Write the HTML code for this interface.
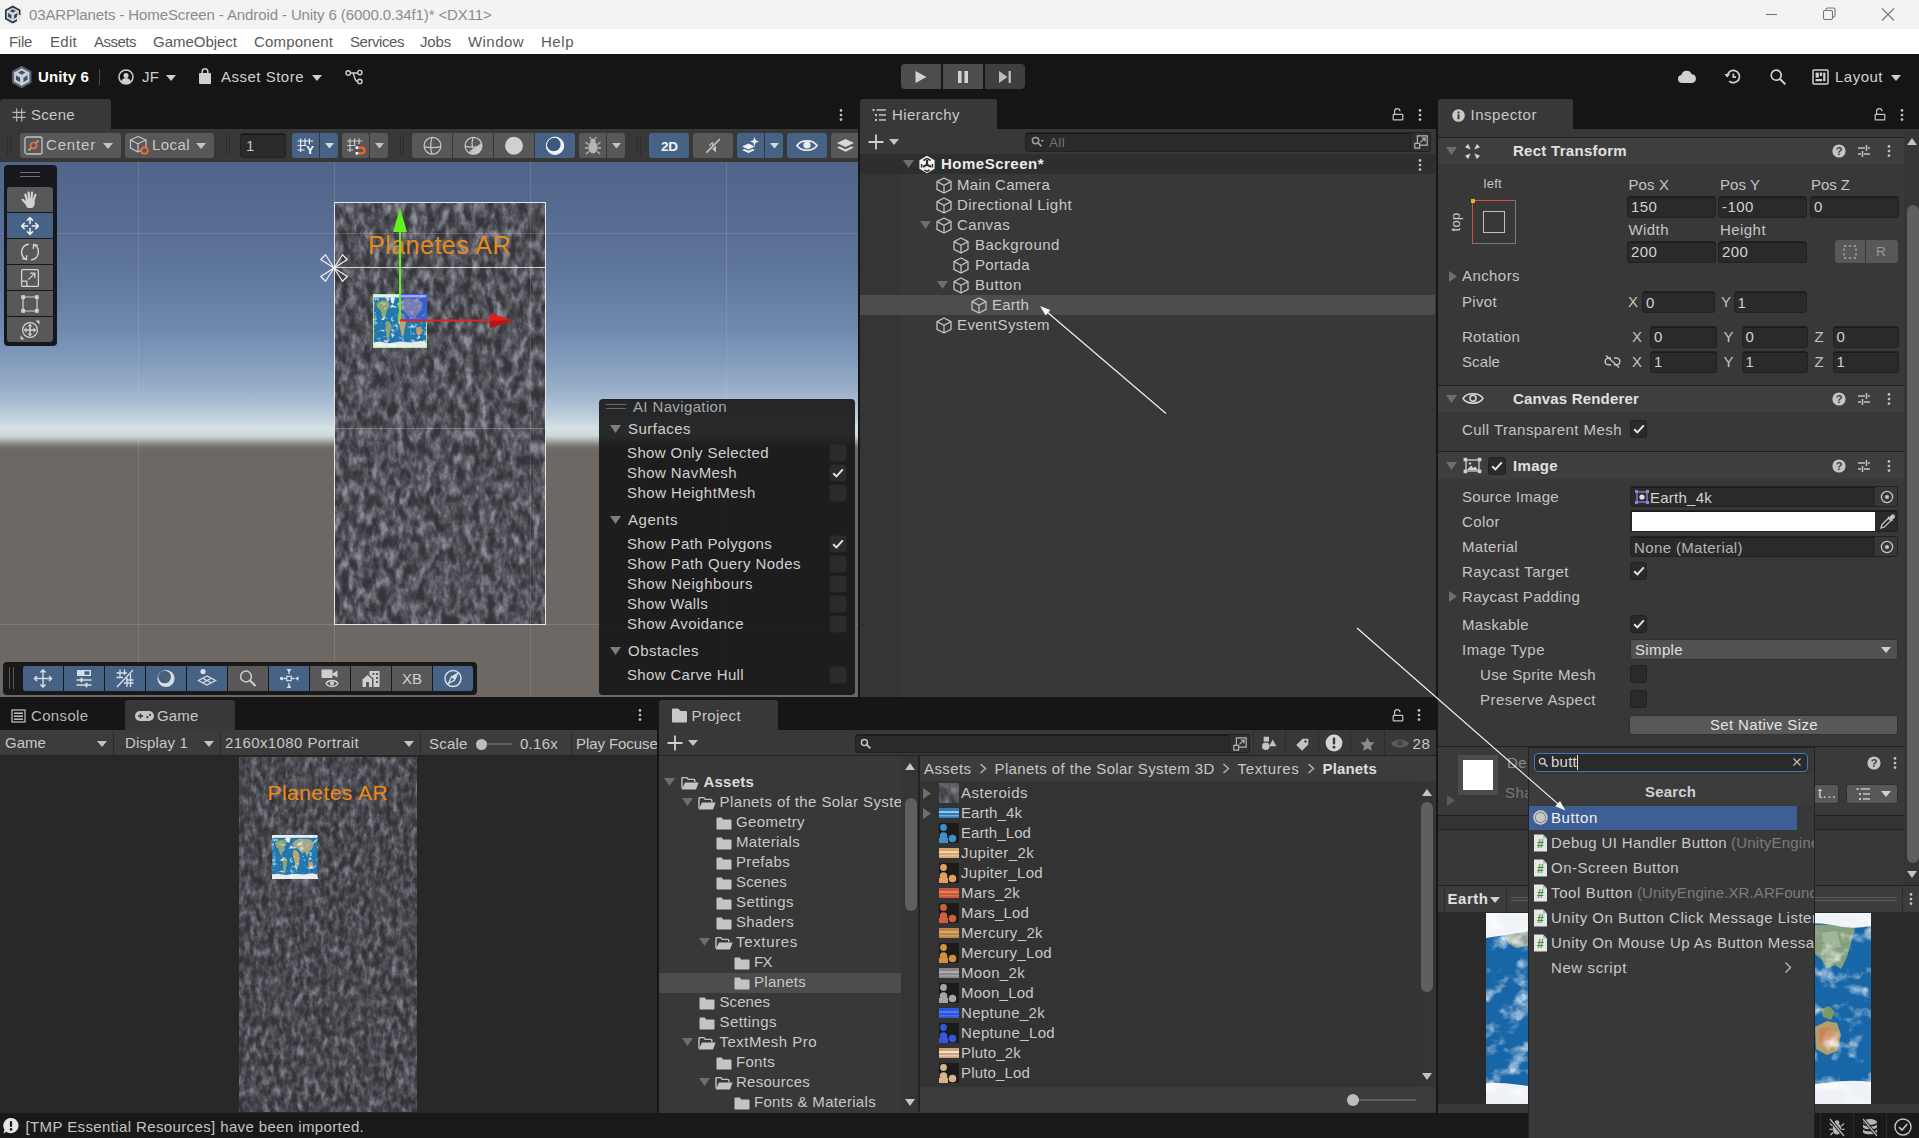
<!DOCTYPE html><html><head><meta charset="utf-8"><title>03ARPlanets - HomeScreen - Android - Unity 6</title><style>
*{box-sizing:border-box;margin:0;padding:0}
html,body{width:1919px;height:1138px;overflow:hidden;background:#191919}
body{font-family:"Liberation Sans",sans-serif;font-size:16px;color:#c8c8c8;position:relative}
div,svg,span.a{position:absolute}
.t{white-space:nowrap;height:20px;line-height:20px;font-size:15px;letter-spacing:0.45px;color:#c8c8c8}
.b{font-weight:bold;color:#dcdcdc}
.dim{color:#8a8a8a}
.btn{background:#585858;border-radius:3px}
.sel{background:#466386}
.fld{background:#2a2a2a;border:1px solid #212121;border-radius:3px;box-shadow:inset 0 1px 0 #1a1a1a}
.chk{background:#2a2a2a;border:1px solid #212121;border-radius:3px;width:18px;height:18px}
.pnl{background:#383838}
.tab{background:#383838;border-radius:3px 3px 0 0}
.clip{overflow:hidden}
</style></head><body>
<div style="left:0px;top:0px;width:1919px;height:29px;background:#f3f3f3"></div>
<svg style="left:3.5px;top:4.5px;" width="17.5" height="19" viewBox="0 0 20 22"><path d="M10 0.6L19 5.6V16.4L10 21.4L1 16.4V5.6Z" fill="#2b313a"/><path d="M10 2.8L17.1 6.7V15.3L10 19.2L2.9 15.3V6.7Z" fill="#ccd5e1"/><path d="M10 5L13.4 6.9L10 8.8L6.6 6.9Z" fill="#39414d"/><path d="M4.6 9.4L8.4 11.6V15.8L4.6 13.6Z" fill="#39414d"/><path d="M15.4 9.4L11.6 11.6V15.8L15.4 13.6Z" fill="#39414d"/></svg>
<div style="left:16.5px;top:15px;width:4.5px;height:7px;background:#dfe2e7;border:1px solid #f3f3f3;border-radius:1px"></div>
<div class="t" style="left:29px;top:5.0px;font-size:15px;letter-spacing:-0.11px;color:#8b8b8b">03ARPlanets - HomeScreen - Android - Unity 6 (6000.0.34f1)* &lt;DX11&gt;</div>
<svg style="left:1760px;top:4px;" width="150" height="20" viewBox="0 0 150 20"><g stroke="#777" stroke-width="1.1" fill="none"><path d="M6 10.5H17"/><rect x="63.5" y="6.5" width="9" height="9" rx="1.5"/><path d="M66 6.3V5.5a1.5 1.5 0 0 1 1.5-1.5h6a1.5 1.5 0 0 1 1.5 1.5v6a1.5 1.5 0 0 1-1.5 1.5H72.8"/><path d="M122 4.5L134 16.5M134 4.5L122 16.5"/></g></svg>
<div style="left:0px;top:29px;width:1919px;height:25px;background:#ffffff"></div>
<div class="t" style="left:9px;top:32.0px;font-size:15px;letter-spacing:-0.29px;color:#5a5a5a">File</div>
<div class="t" style="left:50px;top:32.0px;font-size:15px;letter-spacing:0.29px;color:#5a5a5a">Edit</div>
<div class="t" style="left:94px;top:32.0px;font-size:15px;letter-spacing:-0.50px;color:#5a5a5a">Assets</div>
<div class="t" style="left:153px;top:32.0px;font-size:15px;letter-spacing:-0.02px;color:#5a5a5a">GameObject</div>
<div class="t" style="left:254px;top:32.0px;font-size:15px;letter-spacing:0.16px;color:#5a5a5a">Component</div>
<div class="t" style="left:350px;top:32.0px;font-size:15px;letter-spacing:-0.44px;color:#5a5a5a">Services</div>
<div class="t" style="left:420px;top:32.0px;font-size:15px;letter-spacing:-0.17px;color:#5a5a5a">Jobs</div>
<div class="t" style="left:468px;top:32.0px;font-size:15px;letter-spacing:0.44px;color:#5a5a5a">Window</div>
<div class="t" style="left:541px;top:32.0px;font-size:15px;letter-spacing:0.54px;color:#5a5a5a">Help</div>
<div style="left:0px;top:54px;width:1919px;height:46px;background:#151515"></div>
<svg style="left:11px;top:65px;" width="21.5" height="24" viewBox="0 0 20 22"><path d="M10 0.6L19 5.6V16.4L10 21.4L1 16.4V5.6Z" fill="#5a6472"/><path d="M10 2.8L17.1 6.7V15.3L10 19.2L2.9 15.3V6.7Z" fill="#c6ced9"/><path d="M10 5L13.4 6.9L10 8.8L6.6 6.9Z" fill="#465060"/><path d="M4.6 9.4L8.4 11.6V15.8L4.6 13.6Z" fill="#465060"/><path d="M15.4 9.4L11.6 11.6V15.8L15.4 13.6Z" fill="#465060"/></svg>
<div class="t" style="left:38px;top:67.1px;font-size:15px;letter-spacing:0.14px;font-weight:bold;color:#ffffff">Unity 6</div>
<div style="left:99px;top:69px;width:1px;height:16px;background:#4a4a4a"></div>
<svg style="left:118px;top:69px;" width="16" height="16" viewBox="0 0 16 16"><circle cx="8" cy="8" r="7" fill="none" stroke="#d0d0d0" stroke-width="1.5"/><circle cx="8" cy="6.4" r="2.5" fill="#d0d0d0"/><path d="M3.2 12.6a5 5 0 0 1 9.6 0A6.6 6.6 0 0 1 3.2 12.6Z" fill="#d0d0d0"/></svg>
<div class="t" style="left:142px;top:67.1px;font-size:15px;letter-spacing:0.17px;color:#d0d0d0">JF</div>
<svg style="left:165.5px;top:74.5px;" width="10" height="6" viewBox="0 0 10 6"><path d="M0 0H10L5.0 6Z" fill="#d0d0d0"/></svg>
<svg style="left:198px;top:68px;" width="14" height="17" viewBox="0 0 14 17"><path d="M4.2 5V3.6a2.8 2.8 0 0 1 5.6 0V5" fill="none" stroke="#d0d0d0" stroke-width="1.5"/><rect x="1" y="5" width="12" height="11" rx="1" fill="#d0d0d0"/></svg>
<div class="t" style="left:221px;top:67.1px;font-size:15px;letter-spacing:0.50px;color:#d0d0d0">Asset Store</div>
<svg style="left:311.5px;top:74.5px;" width="10" height="6" viewBox="0 0 10 6"><path d="M0 0H10L5.0 6Z" fill="#d0d0d0"/></svg>
<svg style="left:345px;top:69px;" width="19" height="16" viewBox="0 0 19 16"><g fill="none" stroke="#d0d0d0" stroke-width="1.4"><circle cx="3.2" cy="4" r="2.2"/><circle cx="14.8" cy="3.6" r="2.2"/><circle cx="14.8" cy="12.4" r="2.2"/><path d="M5.4 4H12.6M7.5 4C9.5 4 9 12.4 12.6 12.4"/></g></svg>
<div style="left:901px;top:64px;width:40px;height:25px;background:#4d4d4d;border-radius:4px 0 0 4px"></div>
<div style="left:943px;top:64px;width:40px;height:25px;background:#4d4d4d"></div>
<div style="left:985px;top:64px;width:40px;height:25px;background:#3f3f3f;border-radius:0 4px 4px 0"></div>
<svg style="left:914px;top:70px;" width="14" height="14" viewBox="0 0 14 14"><path d="M1.5 1V13L12.5 7Z" fill="#d2d2d2"/></svg>
<svg style="left:957px;top:70px;" width="12" height="14" viewBox="0 0 12 14"><rect x="1" y="1" width="3.6" height="12" fill="#d2d2d2"/><rect x="7.4" y="1" width="3.6" height="12" fill="#d2d2d2"/></svg>
<svg style="left:998px;top:70px;" width="14" height="14" viewBox="0 0 14 14"><path d="M1 1V13L9.5 7Z" fill="#bcbcbc"/><rect x="10.6" y="1" width="2.2" height="12" fill="#c4c4c4"/></svg>
<svg style="left:1677px;top:70px;" width="20" height="14" viewBox="0 0 20 14"><path d="M5 13a4 4 0 0 1-.6-7.95A5.4 5.4 0 0 1 14.7 4.3 4.4 4.4 0 0 1 15.4 13Z" fill="#d0d0d0"/></svg>
<svg style="left:1724px;top:68px;" width="18" height="17.2" viewBox="0 0 20 19"><g fill="none" stroke="#d0d0d0" stroke-width="1.9"><path d="M3.6 9.5a6.8 6.8 0 1 1 2.2 5"/><path d="M10.4 6V10.2H13.4"/></g><path d="M0.4 6.6H6.8L3.6 10.6Z" fill="#d0d0d0"/></svg>
<svg style="left:1769px;top:68px;" width="18" height="18" viewBox="0 0 18 18"><circle cx="7.2" cy="7.2" r="5" fill="none" stroke="#d0d0d0" stroke-width="1.7"/><path d="M11 11L16.4 16.4" stroke="#d0d0d0" stroke-width="2"/></svg>
<svg style="left:1812px;top:69px;" width="17" height="16" viewBox="0 0 17 16"><rect x="1" y="1" width="15" height="14" rx="1" fill="none" stroke="#d0d0d0" stroke-width="1.5"/><g fill="#d0d0d0"><rect x="3.6" y="3.6" width="3.2" height="5"/><rect x="7.8" y="3.6" width="2.4" height="3.4"/><rect x="11.2" y="3.6" width="2.2" height="8.6"/><rect x="3.6" y="10" width="6.6" height="2.2"/></g></svg>
<div class="t" style="left:1835px;top:67.1px;font-size:15px;letter-spacing:0.49px;color:#d0d0d0">Layout</div>
<svg style="left:1890.5px;top:74.5px;" width="10" height="6" viewBox="0 0 10 6"><path d="M0 0H10L5.0 6Z" fill="#d0d0d0"/></svg>
<div style="left:0px;top:100px;width:1919px;height:30px;background:#151515"></div>
<div class="tab" style="left:0px;top:99px;width:111px;height:31px;"></div>
<svg style="left:11.5px;top:107.5px;" width="14" height="14" viewBox="0 0 15 15"><g stroke="#b8b8b8" stroke-width="1.25"><path d="M5 0.5V14.5M10.4 0.5V14.5M0.5 4.6H14.5M0.5 10H14.5"/></g></svg>
<div class="t" style="left:31px;top:105.1px;font-size:15px;letter-spacing:0.29px;">Scene</div>
<svg style="left:839px;top:107.5px;" width="4" height="14" viewBox="0 0 4 14"><g fill="#c4c4c4"><circle cx="2" cy="2.4" r="1.35"/><circle cx="2" cy="7" r="1.35"/><circle cx="2" cy="11.6" r="1.35"/></g></svg>
<div style="left:0px;top:129px;width:858px;height:33px;background:#383838"></div>
<div style="left:7px;top:135px;width:1px;height:20px;background:#2c2c2c"></div>
<div style="left:10px;top:135px;width:1px;height:20px;background:#2c2c2c"></div>
<div class="btn" style="left:20px;top:133px;width:101px;height:25px;border-radius:3px;"></div>
<svg style="left:24px;top:136px;" width="19" height="19" viewBox="0 0 19 19"><rect x="1" y="1" width="17" height="17" rx="2" fill="none" stroke="#c4c4c4" stroke-width="1.3"/><path d="M4.5 14.5L14.5 4.5" stroke="#c4c4c4" stroke-width="1.2"/><circle cx="9.5" cy="9.5" r="3" fill="#585858" stroke="#f26a3c" stroke-width="1.7"/></svg>
<div class="t" style="left:46px;top:135.1px;font-size:15px;letter-spacing:0.83px;">Center</div>
<svg style="left:103.0px;top:142.5px;" width="10" height="6" viewBox="0 0 10 6"><path d="M0 0H10L5.0 6Z" fill="#c4c4c4"/></svg>
<div class="btn" style="left:125px;top:133px;width:89px;height:25px;border-radius:3px;"></div>
<svg style="left:129px;top:135px;" width="22" height="22" viewBox="0 0 22 22"><g fill="none" stroke="#c4c4c4" stroke-width="1.25" stroke-linejoin="round"><path d="M9 1.5L17 5V13L9 17L1.5 13V5Z"/><path d="M1.5 5L9 8.8L17 5M9 8.8V17"/></g><circle cx="15.5" cy="15.5" r="3.2" fill="#585858" stroke="#f26a3c" stroke-width="1.8"/></svg>
<div class="t" style="left:152px;top:135.1px;font-size:15px;letter-spacing:0.43px;">Local</div>
<svg style="left:196.0px;top:142.5px;" width="10" height="6" viewBox="0 0 10 6"><path d="M0 0H10L5.0 6Z" fill="#c4c4c4"/></svg>
<div style="left:226px;top:135px;width:1px;height:20px;background:#2c2c2c"></div>
<div style="left:229px;top:135px;width:1px;height:20px;background:#2c2c2c"></div>
<div class="fld" style="left:240px;top:133px;width:46px;height:25px;"></div>
<div class="t" style="left:246px;top:136.1px;font-size:15px;letter-spacing:-0.80px;">1</div>
<div class="btn sel" style="left:292px;top:133px;width:27px;height:25px;border-radius:3px 0 0 3px;"></div>
<div class="btn sel" style="left:320px;top:133px;width:18px;height:25px;border-radius:0 3px 3px 0;"></div>
<svg style="left:296px;top:136px;" width="20" height="20" viewBox="0 0 20 20"><g stroke="#f0f0f0" stroke-width="1.2" fill="none"><path d="M4.6 2.4V16M9 2.4V10M13.4 2.4V8.6M1.6 5H17M1.6 9.5H10.5M1.6 14H8.4"/></g><text x="14" y="18" font-size="11.5" font-weight="bold" font-family="Liberation Sans,sans-serif" text-anchor="middle" fill="#ffffff" stroke="#46607c" stroke-width="0.6" paint-order="stroke">Y</text></svg>
<svg style="left:324.5px;top:142.75px;" width="9" height="5.5" viewBox="0 0 9 5.5"><path d="M0 0H9L4.5 5.5Z" fill="#d8d8d8"/></svg>
<div class="btn" style="left:342px;top:133px;width:27px;height:25px;border-radius:3px;"></div>
<div class="btn" style="left:370px;top:133px;width:18px;height:25px;border-radius:0 3px 3px 0;"></div>
<svg style="left:346px;top:136px;" width="22" height="20" viewBox="0 0 22 20"><g stroke="#c8c8c8" stroke-width="1.2" fill="none"><path d="M4 2.4V16M8.6 2.4V10M13 2.4V8M1 5H16.4M1 9.5H9.4M1 14H7.4"/></g><path d="M12 11.6H15.6a2.9 2.9 0 0 1 0 5.8H12" fill="none" stroke="#f4602c" stroke-width="2.4"/><rect x="9.6" y="10.4" width="2.6" height="2.5" fill="#fff"/><rect x="9.6" y="16.1" width="2.6" height="2.5" fill="#fff"/></svg>
<svg style="left:374.5px;top:142.75px;" width="9" height="5.5" viewBox="0 0 9 5.5"><path d="M0 0H9L4.5 5.5Z" fill="#c4c4c4"/></svg>
<div style="left:400px;top:135px;width:1px;height:20px;background:#2c2c2c"></div>
<div style="left:403px;top:135px;width:1px;height:20px;background:#2c2c2c"></div>
<div class="btn" style="left:412px;top:133px;width:40px;height:25px;border-radius:3px 0 0 3px;"></div>
<div class="btn" style="left:453px;top:133px;width:40px;height:25px;border-radius:0;"></div>
<div class="btn" style="left:494px;top:133px;width:40px;height:25px;border-radius:0;"></div>
<div class="btn sel" style="left:535px;top:133px;width:40px;height:25px;border-radius:0 3px 3px 0;"></div>
<svg style="left:422.5px;top:136px;" width="19" height="19.5" viewBox="0 0 19 19.5"><g fill="none" stroke="#c8c8c8" stroke-width="1.25"><circle cx="9.5" cy="9.75" r="8.4"/><path d="M9 1.4C7.6 6 7.6 13.5 9 18.1M1.2 10.6C5 12 14 12 17.8 10.6"/></g></svg>
<svg style="left:463.5px;top:136px;" width="19" height="19.5" viewBox="0 0 19 19.5"><path d="M17.9 9.4A8.4 8.4 0 0 1 4 16.2C10 17 15.4 13.6 17.9 9.4Z M17.6 7C17.6 12 12 16 5 15.4" fill="#c8c8c8"/><path d="M16.4 6.5A7 7 0 0 1 5.2 15.4A9.5 9.5 0 0 0 16.4 6.5Z" fill="#c8c8c8"/><g fill="none" stroke="#c8c8c8" stroke-width="1.25"><circle cx="9.5" cy="9.75" r="8.4"/><path d="M9 1.4C7.8 5 7.8 9 8.6 12.4M1.2 10.2C4 11.2 9 11.4 12.4 10.8"/></g></svg>
<svg style="left:504px;top:136px;" width="20" height="20" viewBox="0 0 20 20"><circle cx="10" cy="9.75" r="9" fill="#d0d0d0"/></svg>
<svg style="left:545px;top:136px;" width="20" height="20" viewBox="0 0 20 20"><circle cx="10" cy="9.75" r="9" fill="#f4f4f4"/><circle cx="8.7" cy="8.4" r="6.9" fill="#3a5a80"/><circle cx="10" cy="9.75" r="8.6" fill="none" stroke="#f4f4f4" stroke-width="1"/></svg>
<div class="btn" style="left:579px;top:133px;width:27px;height:25px;border-radius:3px 0 0 3px;"></div>
<div class="btn" style="left:607px;top:133px;width:18px;height:25px;border-radius:0 3px 3px 0;"></div>
<svg style="left:583px;top:136px;" width="20" height="20" viewBox="0 0 20 20"><g fill="#b4b4b4"><ellipse cx="10" cy="11.5" rx="4.6" ry="6"/><circle cx="10" cy="5" r="2.6"/></g><g stroke="#b4b4b4" stroke-width="1.4" fill="none"><path d="M5.5 8.5L2.5 6M14.5 8.5L17.5 6M5.2 12H2M14.8 12H18M5.8 15.5L3 18M14.2 15.5L17 18M8 3L6.8 1M12 3L13.2 1"/></g></svg>
<svg style="left:611.5px;top:142.75px;" width="9" height="5.5" viewBox="0 0 9 5.5"><path d="M0 0H9L4.5 5.5Z" fill="#c4c4c4"/></svg>
<div style="left:637px;top:135px;width:1px;height:20px;background:#2c2c2c"></div>
<div style="left:640px;top:135px;width:1px;height:20px;background:#2c2c2c"></div>
<div class="btn sel" style="left:649px;top:133px;width:40px;height:25px;border-radius:3px;"></div>
<div class="t" style="left:661px;top:136.7px;font-size:13.5px;letter-spacing:-0.38px;font-weight:bold;color:#f4f4f4">2D</div>
<div class="btn" style="left:693px;top:133px;width:40px;height:25px;border-radius:3px;"></div>
<svg style="left:703px;top:136px;" width="20" height="20" viewBox="0 0 20 20"><path d="M3.4 16.6L17 3" stroke="#c8c8c8" stroke-width="1.5"/><path d="M6.4 9.6L9.6 6.4M9.6 6.4V9.6" stroke="#c8c8c8" stroke-width="1.3" fill="none"/><path d="M13 9.6V16.4L9.2 13Z" fill="#c8c8c8"/></svg>
<div class="btn sel" style="left:737px;top:133px;width:27px;height:25px;border-radius:3px 0 0 3px;"></div>
<div class="btn sel" style="left:765px;top:133px;width:18px;height:25px;border-radius:0 3px 3px 0;"></div>
<svg style="left:740px;top:136px;" width="21" height="20" viewBox="0 0 21 20"><path d="M2 10.5L8.5 7.5L15 10.5L8.5 13.5Z M2 14L4.5 12.9L8.5 14.8L12.5 12.9L15 14L8.5 17Z" fill="#f0f0f0"/><path d="M14.5 1L15.7 4.3L19 5.5L15.7 6.7L14.5 10L13.3 6.7L10 5.5L13.3 4.3Z" fill="#f0f0f0"/></svg>
<svg style="left:769.5px;top:142.75px;" width="9" height="5.5" viewBox="0 0 9 5.5"><path d="M0 0H9L4.5 5.5Z" fill="#d8d8d8"/></svg>
<div class="btn sel" style="left:787px;top:133px;width:40px;height:25px;border-radius:3px;"></div>
<svg style="left:796px;top:138px;" width="22" height="15" viewBox="0 0 22 15"><path d="M1 7.5C5 1.2 17 1.2 21 7.5C17 13.8 5 13.8 1 7.5Z" fill="none" stroke="#ececec" stroke-width="1.7"/><circle cx="11" cy="7" r="3.6" fill="#ececec"/></svg>
<div class="btn" style="left:831px;top:133px;width:27px;height:25px;border-radius:3px 0 0 3px"></div>
<svg style="left:836px;top:137px;" width="20" height="18" viewBox="0 0 20 18"><path d="M1 6L9.5 2L18 6L9.5 10Z M1 10.6L3.6 9.4L9.5 12.2L15.4 9.4L18 10.6L9.5 14.8Z" fill="#d8d8d8"/></svg>
<div class="clip" style="left:0;top:162px;width:858px;height:536px;background:linear-gradient(180deg,#4f6589 0%,#52678b 3.4%,#586e93 13.2%,#647ba0 23.1%,#7089af 31.3%,#859dbe 37.9%,#9bb1ca 42.7%,#abbfd2 45.1%,#bfcfdb 47.6%,#d5e1e5 49.6%,#ccd8da 51.1%,#a5abab 52%,#77746f 53%,#6d6863 53.7%,#6d6863 100%)">
<div style="left:138px;top:0px;width:1px;height:535px;background:rgba(215,215,215,0.17)"></div>
<div style="left:334px;top:0px;width:1px;height:535px;background:rgba(215,215,215,0.17)"></div>
<div style="left:530px;top:0px;width:1px;height:535px;background:rgba(215,215,215,0.17)"></div>
<div style="left:726px;top:0px;width:1px;height:535px;background:rgba(215,215,215,0.17)"></div>
<div style="left:0px;top:71px;width:858px;height:1px;background:rgba(215,215,215,0.17)"></div>
<div style="left:0px;top:266px;width:858px;height:1px;background:rgba(215,215,215,0.17)"></div>
<div style="left:0px;top:462px;width:858px;height:1px;background:rgba(215,215,215,0.17)"></div>
</div>
<svg width="0" height="0" style="left:0;top:0"><defs>
<filter id="granite" x="0" y="0" width="100%" height="100%" color-interpolation-filters="sRGB">
 <feTurbulence type="fractalNoise" baseFrequency="0.13 0.075" numOctaves="4" seed="7" result="n"/>
 <feColorMatrix in="n" type="matrix" values="1.7 0.8 0 0 -0.86  1.7 0.8 0 0 -0.86  1.7 0.8 0 0 -0.86  0 0 0 0 1" result="g"/>
 <feComponentTransfer in="g"><feFuncR type="table" tableValues="0.21 0.27 0.36 0.47 0.56"/><feFuncG type="table" tableValues="0.213 0.273 0.363 0.473 0.563"/><feFuncB type="table" tableValues="0.235 0.298 0.39 0.505 0.60"/></feComponentTransfer>
</filter>
<filter id="granite2" x="0" y="0" width="100%" height="100%" color-interpolation-filters="sRGB">
 <feTurbulence type="fractalNoise" baseFrequency="0.17 0.10" numOctaves="4" seed="19" result="n"/>
 <feColorMatrix in="n" type="matrix" values="1.5 0.7 0 0 -0.74  1.5 0.7 0 0 -0.74  1.5 0.7 0 0 -0.74  0 0 0 0 1" result="g"/>
 <feComponentTransfer in="g"><feFuncR type="table" tableValues="0.20 0.255 0.335 0.435 0.52"/><feFuncG type="table" tableValues="0.202 0.257 0.337 0.437 0.522"/><feFuncB type="table" tableValues="0.222 0.28 0.365 0.47 0.56"/></feComponentTransfer>
</filter>
<filter id="clouds" x="0" y="0" width="100%" height="100%" color-interpolation-filters="sRGB">
 <feTurbulence type="fractalNoise" baseFrequency="0.22 0.26" numOctaves="3" seed="3" result="n"/>
 <feColorMatrix in="n" type="matrix" values="0 0 0 0 1  0 0 0 0 1  0 0 0 0 1  3.4 2.2 0 0 -3.05"/>
</filter>
<filter id="clouds2" x="0" y="0" width="100%" height="100%" color-interpolation-filters="sRGB">
 <feTurbulence type="fractalNoise" baseFrequency="0.045 0.055" numOctaves="4" seed="11" result="n"/>
 <feColorMatrix in="n" type="matrix" values="0 0 0 0 1  0 0 0 0 1  0 0 0 0 1  2.6 1.6 0 0 -2.2"/>
</filter>
</defs></svg>
<div class="clip" style="left:0;top:162px;width:858px;height:535px">
<svg style="left:334px;top:40px;" width="212" height="423" viewBox="0 0 212 423"><rect width="212" height="423" filter="url(#granite)"/></svg>
<div style="left:334px;top:40px;width:212px;height:423px;border:1px solid #e6e6e6"></div>
<div style="left:334px;top:71px;width:212px;height:1px;background:rgba(225,225,225,0.22)"></div>
<div style="left:334px;top:105px;width:212px;height:1px;background:rgba(235,235,235,0.85)"></div>
<div style="left:334px;top:266px;width:212px;height:1px;background:rgba(225,225,225,0.3)"></div>
<div style="left:530px;top:40px;width:1px;height:423px;background:rgba(225,225,225,0.16)"></div>
<div class="t" style="left:368px;top:68px;height:30px;line-height:30px;font-size:25px;color:#e58a1c;letter-spacing:0.49px">Planetes AR</div>
<svg style="left:373px;top:132px;" width="54" height="54" viewBox="0 0 54 54"><rect width="54" height="54" fill="#2277ad"/><g transform="scale(0.5400,1.0800)"><g fill="#8fa672"><path d="M6 9L16 6L28 6L31 11L26 15L24 19L21 23L17 21L14 15L9 13Z"/><path d="M23 26L29 25L34 29L31 37L27 46L25 40L24 33Z"/><path d="M46 18L52 17L57 19L61 26L57 37L53 39L50 31L46 24Z" fill="#b6a871"/><path d="M45 9L52 6L62 4L84 5L93 9L88 16L81 19L77 25L72 19L66 21L60 17L55 15L48 14Z" fill="#a3a88a"/><path d="M80 31L89 30L91 36L84 39L80 36Z" fill="#c19a68"/></g><path d="M32 3L41 3L38 9L34 8Z" fill="#eef1f4"/><rect width="100" height="3.2" fill="#e9eef3"/><path d="M0 50V45L12 44L30 45.5L50 44L70 45L88 43.5L100 45V50Z" fill="#e8ecf1"/></g><rect width="54" height="54" filter="url(#clouds)" opacity="0.8"/></svg>
<div style="left:373px;top:132px;width:54px;height:54px;border:1px solid rgba(170,240,150,0.9)"></div>
<div style="left:400px;top:132px;width:27px;height:26px;background:rgba(70,70,235,0.42);border:1px solid rgba(60,80,255,0.9)"></div>
<svg style="left:380px;top:38px;" width="140" height="135" viewBox="0 0 140 135"><path d="M20 120V30" stroke="#63f01e" stroke-width="2"/><path d="M20 8L27 32H13Z" fill="#63f01e"/><path d="M20 120.5H112" stroke="#e02424" stroke-width="2"/><path d="M132 120.5L110 113V128Z" fill="#e31d1d"/><path d="M132 120.5L110 120.5V128Z" fill="#b81414"/></svg>
<svg style="left:317px;top:89px;" width="34" height="34" viewBox="0 0 32 32"><g fill="none" stroke="#f2f2f2" stroke-width="1.1" stroke-linejoin="round"><path d="M16 16L3.5 8L8 3.5Z"/><path d="M16 16L28.5 8L24 3.5Z"/><path d="M16 16L3.5 24L8 28.5Z"/><path d="M16 16L28.5 24L24 28.5Z"/></g></svg>
</div>
<div style="left:3.5px;top:165px;width:53.5px;height:181px;background:#16181d;border-radius:4px"></div>
<div style="left:20px;top:172px;width:20px;height:1px;background:#707070"></div>
<div style="left:20px;top:176px;width:20px;height:1px;background:#707070"></div>
<div class="btn" style="left:7px;top:187px;width:46px;height:25px;border-radius:3px 3px 0 0"></div>
<div class="btn sel" style="left:7px;top:213px;width:46px;height:25px;border-radius:0"></div>
<div class="btn" style="left:7px;top:239px;width:46px;height:25px;border-radius:0"></div>
<div class="btn" style="left:7px;top:265px;width:46px;height:25px;border-radius:0"></div>
<div class="btn" style="left:7px;top:291px;width:46px;height:25px;border-radius:0"></div>
<div class="btn" style="left:7px;top:317px;width:46px;height:25px;border-radius:0 0 3px 3px"></div>
<svg style="left:20px;top:189.5px;" width="20" height="20" viewBox="0 0 20 20"><g stroke="#d2d2d2" stroke-width="2.2" stroke-linecap="round" fill="none"><path d="M7 10.4L5.4 4.6M9.2 9.6L8.6 2.6M11.4 9.6L12 2.6M13.4 10.6L15.4 4.8M6.4 13.6L2.6 9.8"/></g><path d="M5.4 10.5Q10 7.8 14.6 10.5Q15.4 15 13 17.4Q10 18.8 7.2 17.4Q5.2 15.4 5.4 10.5Z" fill="#d2d2d2"/></svg>
<svg style="left:20px;top:215.5px;" width="20" height="20" viewBox="0 0 20 20"><g stroke="#f0f0f0" stroke-width="1.5" fill="none" stroke-linecap="round" stroke-linejoin="round"><path d="M10 1.6V7.6M10 12.4V18.4M1.6 10H7.6M12.4 10H18.4M7.4 4.2L10 1.6L12.6 4.2M7.4 15.8L10 18.4L12.6 15.8M4.2 7.4L1.6 10L4.2 12.6M15.8 7.4L18.4 10L15.8 12.6"/></g></svg>
<svg style="left:20px;top:241.5px;" width="20" height="20" viewBox="0 0 20 20"><g stroke="#d2d2d2" stroke-width="1.4" fill="none" stroke-linecap="round" stroke-linejoin="round"><path d="M13.6 2.6A8 8 0 0 1 11.6 17.8M6.4 17.4A8 8 0 0 1 8.4 2.2"/><path d="M13.4 6.4L13.6 2.4L17.4 3.4M6.6 13.6L6.4 17.6L2.6 16.6"/></g></svg>
<svg style="left:20px;top:267.5px;" width="20" height="20" viewBox="0 0 20 20"><g stroke="#d2d2d2" stroke-width="1.3" fill="none"><rect x="1.6" y="1.6" width="16.8" height="16.8" rx="1.2"/><path d="M1.6 13.2H6.8V18.4"/><path d="M8.4 11.6L14.6 5.4M10 5.2H14.8V10"/></g></svg>
<svg style="left:20px;top:293.5px;" width="20" height="20" viewBox="0 0 20 20"><g stroke="#d2d2d2" stroke-width="1.2"><path d="M5 3H15M5 17H15M3 5V15M17 5V15"/></g><g fill="#d2d2d2"><rect x="1.2" y="1.2" width="3.8" height="3.8"/><rect x="15" y="1.2" width="3.8" height="3.8"/><rect x="1.2" y="15" width="3.8" height="3.8"/><rect x="15" y="15" width="3.8" height="3.8"/></g></svg>
<svg style="left:20px;top:319.5px;" width="20" height="20" viewBox="0 0 20 20"><g stroke="#d2d2d2" stroke-width="1.2" fill="none"><circle cx="10" cy="10" r="7.4"/></g><g fill="#d2d2d2"><path d="M9.2 6.4H10.8V13.6H9.2ZM6.4 9.2H13.6V10.8H6.4Z"/><path d="M10 3.6L12.4 6.6H7.6ZM10 16.4L12.4 13.4H7.6ZM3.6 10L6.6 7.6V12.4ZM16.4 10L13.4 7.6V12.4Z"/><path d="M15.6 0.6H19.4V4.4ZM4.4 19.4H0.6V15.6Z"/></g></svg>
<div style="left:3px;top:662px;width:474px;height:33px;background:#191919;border-radius:4px"></div>
<div style="left:9px;top:667px;width:1px;height:22px;background:#5a5a5a"></div>
<div style="left:13px;top:667px;width:1px;height:22px;background:#5a5a5a"></div>
<div class="btn sel" style="left:23px;top:666px;width:40px;height:25px;border-radius:3px 0 0 3px"></div>
<div class="btn sel" style="left:64px;top:666px;width:40px;height:25px;border-radius:0"></div>
<div class="btn sel" style="left:105px;top:666px;width:40px;height:25px;border-radius:0"></div>
<div class="btn sel" style="left:146px;top:666px;width:40px;height:25px;border-radius:0"></div>
<div class="btn sel" style="left:187px;top:666px;width:40px;height:25px;border-radius:0"></div>
<div class="btn" style="left:228px;top:666px;width:40px;height:25px;border-radius:0"></div>
<div class="btn sel" style="left:269px;top:666px;width:40px;height:25px;border-radius:0"></div>
<div class="btn" style="left:310px;top:666px;width:40px;height:25px;border-radius:0"></div>
<div class="btn" style="left:351px;top:666px;width:40px;height:25px;border-radius:0"></div>
<div class="btn" style="left:392px;top:666px;width:40px;height:25px;border-radius:0"></div>
<div class="btn sel" style="left:433px;top:666px;width:40px;height:25px;border-radius:0 3px 3px 0"></div>
<svg style="left:33px;top:668px;" width="20" height="21" viewBox="0 0 20 21"><g stroke="#d8dde4" stroke-width="1.4" fill="none"><path d="M10 2V19M1.5 10.5H18.5M7.4 4.6L10 2L12.6 4.6M7.4 16.4L10 19L12.6 16.4M4 7.9L1.4 10.5L4 13.1M16 7.9L18.6 10.5L16 13.1"/></g></svg>
<svg style="left:74px;top:668px;" width="20" height="21" viewBox="0 0 20 21"><rect x="3" y="2" width="14" height="6" fill="#d8dde4"/><rect x="10.5" y="3.3" width="5" height="3.4" fill="#46607c"/><g stroke="#d8dde4" stroke-width="1.5"><path d="M2.5 12H17.5M2.5 17H17.5"/><path d="M7.5 9.8V14.2M12.5 14.8V19.2" stroke-width="2"/></g></svg>
<svg style="left:115px;top:668px;" width="20" height="21" viewBox="0 0 20 21"><g stroke="#d8dde4" stroke-width="1.3" fill="none"><path d="M5 1.5V10M9.5 1.5V7M1.5 5H12M1.5 9.5H8M18 2L2 19M11 12H18.5M9 15H18.5M12 9.5V19M15.5 6V19"/></g></svg>
<svg style="left:156px;top:668px;" width="20" height="21" viewBox="0 0 20 21"><circle cx="10" cy="10.5" r="8.6" fill="#d8dde4"/><circle cx="8.6" cy="9" r="6.3" fill="#46607c"/></svg>
<svg style="left:197px;top:668px;" width="20" height="21" viewBox="0 0 20 21"><circle cx="6" cy="3.6" r="2.6" fill="#d8dde4"/><g stroke="#d8dde4" stroke-width="1.3" fill="none"><path d="M10 8L18.5 12.5L10 17L1.5 12.5Z"/><path d="M5.7 10.2L14.3 14.8M14.3 10.2L5.7 14.8"/></g></svg>
<svg style="left:238px;top:668px;" width="20" height="21" viewBox="0 0 20 21"><circle cx="8" cy="8.5" r="5.4" fill="none" stroke="#d0d0d0" stroke-width="1.5"/><path d="M12 12.5L17.5 18" stroke="#d0d0d0" stroke-width="2"/></svg>
<svg style="left:279px;top:668px;" width="20" height="21" viewBox="0 0 20 21"><g fill="#d8dde4"><rect x="7.8" y="8.3" width="4.4" height="4.4" fill="none" stroke="#d8dde4" stroke-width="1.2"/><path d="M10 6V3M10 15V18M7.5 10.5H4.5M12.5 10.5H15.5" stroke="#d8dde4" stroke-width="1.3"/><path d="M7.6 1H12.4L10 4.4ZM7.6 20H12.4L10 16.6Z"/><circle cx="2.6" cy="10.5" r="1.8"/><path d="M19.5 8.2V12.8L16 10.5Z"/></g></svg>
<svg style="left:320px;top:668px;" width="20" height="21" viewBox="0 0 20 21"><rect x="1.5" y="1.5" width="11" height="8.5" rx="1" fill="#d0d0d0"/><path d="M12.5 5.5L17.5 2.5V9.5L12.5 7Z" fill="#d0d0d0"/><path d="M6 15.5C8.5 11.5 15.5 11.5 18 15.5C15.5 19.5 8.5 19.5 6 15.5Z" fill="none" stroke="#d0d0d0" stroke-width="1.4"/><circle cx="12" cy="15.3" r="2" fill="#d0d0d0"/></svg>
<svg style="left:361px;top:668px;" width="20" height="21" viewBox="0 0 20 21"><path d="M1.5 19V11.5L6.5 7L11 11V19H8V14H5V19Z" fill="#d0d0d0"/><path d="M8.5 3H18.5V19H12.5V10.5L8.5 7Z" fill="#d0d0d0"/><g fill="#585858"><rect x="11.5" y="5" width="2" height="2"/><rect x="15" y="5" width="2" height="2"/><rect x="15" y="9" width="2" height="2"/><rect x="15" y="13" width="2" height="2"/></g></svg>
<div class="t" style="left:402px;top:668.6px;font-size:15px;letter-spacing:-0.00px;color:#d0d0d0">XB</div>
<svg style="left:443px;top:668px;" width="20" height="21" viewBox="0 0 20 21"><circle cx="10" cy="10.5" r="8" fill="none" stroke="#d8dde4" stroke-width="1.5"/><path d="M14.5 5.5L11.6 12L5.5 15.5L8.4 9Z" fill="none" stroke="#d8dde4" stroke-width="1.3"/><path d="M14.5 5.5L11.6 12L8.4 9Z" fill="#d8dde4"/></svg>
<div style="left:599px;top:398.5px;width:256px;height:296px;background:rgba(21,21,21,0.9);border-radius:4px"></div>
<div style="left:606px;top:404px;width:20px;height:1px;background:#6a6a6a"></div>
<div style="left:606px;top:408px;width:20px;height:1px;background:#6a6a6a"></div>
<div class="t" style="left:633px;top:397.1px;font-size:15px;letter-spacing:0.37px;color:#a8a8a8">AI Navigation</div>
<svg style="left:610.0px;top:425px;" width="11" height="8" viewBox="0 0 11 8"><path d="M0 0H11L5.5 8Z" fill="#7e7e7e"/></svg>
<div class="t" style="left:628px;top:419.1px;font-size:15px;letter-spacing:0.48px;color:#d0d0d0">Surfaces</div>
<div class="t" style="left:627px;top:443.1px;font-size:15px;letter-spacing:0.38px;color:#d0d0d0">Show Only Selected</div>
<div style="left:829px;top:444px;width:18px;height:18px;background:#2b2b2b;border-radius:3px;border:1px solid #232323"></div>
<div class="t" style="left:627px;top:463.1px;font-size:15px;letter-spacing:0.41px;color:#d0d0d0">Show NavMesh</div>
<div style="left:829px;top:464px;width:18px;height:18px;background:#2b2b2b;border-radius:3px;border:1px solid #232323"></div>
<svg style="left:832px;top:468px;" width="12" height="10" viewBox="0 0 12 10"><path d="M1.2 5.2L4.4 8.4L10.8 1.4" fill="none" stroke="#e4e4e4" stroke-width="2"/></svg>
<div class="t" style="left:627px;top:483.1px;font-size:15px;letter-spacing:0.48px;color:#d0d0d0">Show HeightMesh</div>
<div style="left:829px;top:484px;width:18px;height:18px;background:#2b2b2b;border-radius:3px;border:1px solid #232323"></div>
<svg style="left:610.0px;top:516px;" width="11" height="8" viewBox="0 0 11 8"><path d="M0 0H11L5.5 8Z" fill="#7e7e7e"/></svg>
<div class="t" style="left:628px;top:510.1px;font-size:15px;letter-spacing:0.55px;color:#d0d0d0">Agents</div>
<div class="t" style="left:627px;top:534.1px;font-size:15px;letter-spacing:0.37px;color:#d0d0d0">Show Path Polygons</div>
<div style="left:829px;top:535px;width:18px;height:18px;background:#2b2b2b;border-radius:3px;border:1px solid #232323"></div>
<svg style="left:832px;top:539px;" width="12" height="10" viewBox="0 0 12 10"><path d="M1.2 5.2L4.4 8.4L10.8 1.4" fill="none" stroke="#e4e4e4" stroke-width="2"/></svg>
<div class="t" style="left:627px;top:554.1px;font-size:15px;letter-spacing:0.42px;color:#d0d0d0">Show Path Query Nodes</div>
<div style="left:829px;top:555px;width:18px;height:18px;background:#2b2b2b;border-radius:3px;border:1px solid #232323"></div>
<div class="t" style="left:627px;top:574.1px;font-size:15px;letter-spacing:0.51px;color:#d0d0d0">Show Neighbours</div>
<div style="left:829px;top:575px;width:18px;height:18px;background:#2b2b2b;border-radius:3px;border:1px solid #232323"></div>
<div class="t" style="left:627px;top:594.1px;font-size:15px;letter-spacing:0.32px;color:#d0d0d0">Show Walls</div>
<div style="left:829px;top:595px;width:18px;height:18px;background:#2b2b2b;border-radius:3px;border:1px solid #232323"></div>
<div class="t" style="left:627px;top:614.1px;font-size:15px;letter-spacing:0.45px;color:#d0d0d0">Show Avoidance</div>
<div style="left:829px;top:615px;width:18px;height:18px;background:#2b2b2b;border-radius:3px;border:1px solid #232323"></div>
<svg style="left:610.0px;top:647px;" width="11" height="8" viewBox="0 0 11 8"><path d="M0 0H11L5.5 8Z" fill="#7e7e7e"/></svg>
<div class="t" style="left:628px;top:641.1px;font-size:15px;letter-spacing:0.48px;color:#d0d0d0">Obstacles</div>
<div class="t" style="left:627px;top:665.1px;font-size:15px;letter-spacing:0.35px;color:#d0d0d0">Show Carve Hull</div>
<div style="left:829px;top:666px;width:18px;height:18px;background:#2b2b2b;border-radius:3px;border:1px solid #232323"></div>
<div style="left:858px;top:100px;width:2px;height:597px;background:#161616"></div>
<div class="tab" style="left:860px;top:99px;width:137px;height:31px;"></div>
<svg style="left:872px;top:108px;" width="15" height="14" viewBox="0 0 15 14"><g fill="#c4c4c4"><rect x="0.5" y="1" width="2" height="2"/><rect x="4.5" y="1.2" width="9.5" height="1.5"/><rect x="3" y="6" width="2" height="2"/><rect x="7" y="6.2" width="7" height="1.5"/><rect x="3" y="11" width="2" height="2"/><rect x="7" y="11.2" width="7" height="1.5"/></g></svg>
<div class="t" style="left:892px;top:105.1px;font-size:15px;letter-spacing:0.42px;">Hierarchy</div>
<svg style="left:1392px;top:107px;" width="12" height="14" viewBox="0 0 12 14"><g fill="none" stroke="#c4c4c4" stroke-width="1.2"><path d="M2.6 7.4V4.6a2.7 2.7 0 0 1 5.4 -0.4"/><rect x="1.2" y="7.4" width="9.6" height="5.4" rx="0.6"/></g></svg>
<svg style="left:1417.5px;top:107.5px;" width="4" height="14" viewBox="0 0 4 14"><g fill="#c4c4c4"><circle cx="2" cy="2.4" r="1.35"/><circle cx="2" cy="7" r="1.35"/><circle cx="2" cy="11.6" r="1.35"/></g></svg>
<div class="pnl" style="left:860px;top:129px;width:576px;height:568px;"></div>
<svg style="left:868px;top:134px;" width="16" height="16" viewBox="0 0 16 16"><path d="M8 0.5V15.5M0.5 8H15.5" stroke="#d0d0d0" stroke-width="1.8"/></svg>
<svg style="left:888.5px;top:139.0px;" width="10" height="6" viewBox="0 0 10 6"><path d="M0 0H10L5.0 6Z" fill="#c4c4c4"/></svg>
<div class="fld" style="left:1025px;top:132px;width:386px;height:20px;border-radius:3px 0 0 3px"></div>
<svg style="left:1031px;top:136px;" width="14" height="12" viewBox="0 0 14 12"><circle cx="4.6" cy="4.6" r="3.2" fill="none" stroke="#a0a0a0" stroke-width="1.5"/><path d="M7 7L10.4 10.4" stroke="#a0a0a0" stroke-width="1.7"/><path d="M9.6 4H13L11.3 6Z" fill="#a0a0a0"/></svg>
<div class="t" style="left:1049px;top:132.7px;font-size:13.5px;letter-spacing:0.33px;color:#747474">All</div>
<div style="left:1411px;top:132px;width:20px;height:20px;background:#303030;border:1px solid #212121;border-left:none;border-radius:0 3px 3px 0"></div>
<svg style="left:1414px;top:135px;" width="14" height="14" viewBox="0 0 14 14"><g fill="none" stroke="#b4b4b4" stroke-width="1.2"><path d="M3.4 0.8H13.2V10.2H3.4Z"/><path d="M0.8 8.4H5.6V13.2H0.8Z" fill="#303030"/><path d="M6.4 7.4L10.8 3.2M7.6 3H11V6.4"/></g></svg>
<div style="left:860px;top:154px;width:40px;height:543px;background:#353535"></div>
<div style="left:860px;top:154px;width:575px;height:20px;background:#2e2e2e"></div>
<svg style="left:902.5px;top:160px;" width="11" height="8" viewBox="0 0 11 8"><path d="M0 0H11L5.5 8Z" fill="#6e6e6e"/></svg>
<svg style="left:918px;top:155px;" width="18" height="19" viewBox="0 0 18 19"><path d="M9 0.8L16.6 5.2V13.8L9 18.2L1.4 13.8V5.2Z" fill="#f2f2f2"/><path d="M9 5V9.6L5 11.9M9 9.6L13 11.9" stroke="#2e2e2e" stroke-width="2.2" fill="none"/><path d="M9 3.4L12.6 5.5M9 3.4L5.4 5.5M3.6 9V12.6M14.4 9V12.6M6.4 15L9 16.4L11.6 15" stroke="#2e2e2e" stroke-width="1.5" fill="none"/></svg>
<div class="t" style="left:941px;top:153.8px;font-size:15px;letter-spacing:0.50px;font-weight:bold;color:#ececec">HomeScreen*</div>
<svg style="left:1418px;top:158px;" width="4" height="14" viewBox="0 0 4 14"><g fill="#c4c4c4"><circle cx="2" cy="2.4" r="1.35"/><circle cx="2" cy="7" r="1.35"/><circle cx="2" cy="11.6" r="1.35"/></g></svg>
<div style="left:860px;top:295px;width:575px;height:20px;background:#4d4d4d"></div>
<svg style="left:936px;top:176.5px;" width="16" height="17" viewBox="0 0 16 17"><g fill="none" stroke="#c4c4c4" stroke-width="1.25" stroke-linejoin="round"><path d="M8 1L15 4.6V12.4L8 16L1 12.4V4.6Z"/><path d="M1 4.6L8 8.2L15 4.6M8 8.2V16"/></g></svg>
<div class="t" style="left:957px;top:174.5px;font-size:15px;letter-spacing:0.27px;">Main Camera</div>
<svg style="left:936px;top:196.5px;" width="16" height="17" viewBox="0 0 16 17"><g fill="none" stroke="#c4c4c4" stroke-width="1.25" stroke-linejoin="round"><path d="M8 1L15 4.6V12.4L8 16L1 12.4V4.6Z"/><path d="M1 4.6L8 8.2L15 4.6M8 8.2V16"/></g></svg>
<div class="t" style="left:957px;top:194.5px;font-size:15px;letter-spacing:0.44px;">Directional Light</div>
<svg style="left:919.5px;top:221px;" width="11" height="8" viewBox="0 0 11 8"><path d="M0 0H11L5.5 8Z" fill="#6e6e6e"/></svg>
<svg style="left:936px;top:216.5px;" width="16" height="17" viewBox="0 0 16 17"><g fill="none" stroke="#c4c4c4" stroke-width="1.25" stroke-linejoin="round"><path d="M8 1L15 4.6V12.4L8 16L1 12.4V4.6Z"/><path d="M1 4.6L8 8.2L15 4.6M8 8.2V16"/></g></svg>
<div class="t" style="left:957px;top:214.5px;font-size:15px;letter-spacing:0.36px;">Canvas</div>
<svg style="left:953px;top:236.5px;" width="16" height="17" viewBox="0 0 16 17"><g fill="none" stroke="#c4c4c4" stroke-width="1.25" stroke-linejoin="round"><path d="M8 1L15 4.6V12.4L8 16L1 12.4V4.6Z"/><path d="M1 4.6L8 8.2L15 4.6M8 8.2V16"/></g></svg>
<div class="t" style="left:975px;top:234.5px;font-size:15px;letter-spacing:0.49px;">Background</div>
<svg style="left:953px;top:256.5px;" width="16" height="17" viewBox="0 0 16 17"><g fill="none" stroke="#c4c4c4" stroke-width="1.25" stroke-linejoin="round"><path d="M8 1L15 4.6V12.4L8 16L1 12.4V4.6Z"/><path d="M1 4.6L8 8.2L15 4.6M8 8.2V16"/></g></svg>
<div class="t" style="left:975px;top:254.5px;font-size:15px;letter-spacing:0.35px;">Portada</div>
<svg style="left:936.5px;top:281px;" width="11" height="8" viewBox="0 0 11 8"><path d="M0 0H11L5.5 8Z" fill="#6e6e6e"/></svg>
<svg style="left:953px;top:276.5px;" width="16" height="17" viewBox="0 0 16 17"><g fill="none" stroke="#c4c4c4" stroke-width="1.25" stroke-linejoin="round"><path d="M8 1L15 4.6V12.4L8 16L1 12.4V4.6Z"/><path d="M1 4.6L8 8.2L15 4.6M8 8.2V16"/></g></svg>
<div class="t" style="left:975px;top:274.5px;font-size:15px;letter-spacing:0.60px;">Button</div>
<svg style="left:971px;top:296.5px;" width="16" height="17" viewBox="0 0 16 17"><g fill="none" stroke="#c4c4c4" stroke-width="1.25" stroke-linejoin="round"><path d="M8 1L15 4.6V12.4L8 16L1 12.4V4.6Z"/><path d="M1 4.6L8 8.2L15 4.6M8 8.2V16"/></g></svg>
<div class="t" style="left:992px;top:294.5px;font-size:15px;letter-spacing:0.23px;">Earth</div>
<svg style="left:936px;top:316.5px;" width="16" height="17" viewBox="0 0 16 17"><g fill="none" stroke="#c4c4c4" stroke-width="1.25" stroke-linejoin="round"><path d="M8 1L15 4.6V12.4L8 16L1 12.4V4.6Z"/><path d="M1 4.6L8 8.2L15 4.6M8 8.2V16"/></g></svg>
<div class="t" style="left:957px;top:314.5px;font-size:15px;letter-spacing:0.42px;">EventSystem</div>
<div style="left:1436px;top:100px;width:2px;height:1014px;background:#161616"></div>
<div class="tab" style="left:1438px;top:99px;width:135px;height:31px;"></div>
<svg style="left:1451.5px;top:108.5px;" width="13" height="13" viewBox="0 0 13 13"><circle cx="6.5" cy="6.5" r="6.3" fill="#c8c8c8"/><rect x="5.5" y="5.4" width="2" height="4.8" fill="#383838"/><rect x="5.5" y="2.6" width="2" height="1.9" fill="#383838"/></svg>
<div class="t" style="left:1470.5px;top:105.1px;font-size:15px;letter-spacing:0.53px;">Inspector</div>
<svg style="left:1874px;top:107px;" width="12" height="14" viewBox="0 0 12 14"><g fill="none" stroke="#c4c4c4" stroke-width="1.2"><path d="M2.6 7.4V4.6a2.7 2.7 0 0 1 5.4 -0.4"/><rect x="1.2" y="7.4" width="9.6" height="5.4" rx="0.6"/></g></svg>
<svg style="left:1900px;top:107.5px;" width="4" height="14" viewBox="0 0 4 14"><g fill="#c4c4c4"><circle cx="2" cy="2.4" r="1.35"/><circle cx="2" cy="7" r="1.35"/><circle cx="2" cy="11.6" r="1.35"/></g></svg>
<div class="pnl" style="left:1438px;top:129px;width:481px;height:985px;"></div>
<div style="left:1438px;top:137px;width:466px;height:1px;background:#1f1f1f"></div>
<div style="left:1438px;top:138px;width:466px;height:26px;background:#3e3e3e"></div>
<svg style="left:1445.5px;top:147.0px;" width="11" height="8" viewBox="0 0 11 8"><path d="M0 0H11L5.5 8Z" fill="#6e6e6e"/></svg>
<svg style="left:1464px;top:143px;" width="17" height="17" viewBox="0 0 17 17"><g fill="#d8d8d8"><path d="M1 4.2L4.2 1L6.6 6.6Z"/><path d="M16 4.2L12.8 1L10.4 6.6Z"/><path d="M1 12.8L4.2 16L6.6 10.4Z"/><path d="M16 12.8L12.8 16L10.4 10.4Z"/></g></svg>
<div class="t" style="left:1513px;top:141.1px;font-size:15px;letter-spacing:0.28px;font-weight:bold;color:#e0e0e0">Rect Transform</div>
<svg style="left:1831.5px;top:144.0px;" width="14" height="14" viewBox="0 0 14 14"><circle cx="7" cy="7" r="6.6" fill="#c4c4c4"/><text x="7" y="11" font-size="11" font-weight="bold" font-family="Liberation Sans,sans-serif" text-anchor="middle" fill="#3c3c3c">?</text></svg>
<svg style="left:1856.5px;top:144.0px;" width="14" height="14" viewBox="0 0 14 14"><g stroke="#c4c4c4" stroke-width="1.5" fill="none"><path d="M1 4H8M11 4H13M1 10H4M7 10H13M9.5 1V7M5.5 7V13"/></g></svg>
<svg style="left:1886.5px;top:144.0px;" width="4" height="14" viewBox="0 0 4 14"><g fill="#c4c4c4"><circle cx="2" cy="2.4" r="1.35"/><circle cx="2" cy="7" r="1.35"/><circle cx="2" cy="11.6" r="1.35"/></g></svg>
<div class="t" style="left:1483.5px;top:174.0px;font-size:13px;letter-spacing:0.29px;color:#c4c4c4">left</div>
<div class="t" style="left:1446px;top:212px;width:20px;text-align:center;font-size:13px;transform:rotate(-90deg);letter-spacing:0.3px">top</div>
<div style="left:1472px;top:200px;width:44px;height:44px;border:1px solid #7a7a7a;border-left-color:#d05050;border-top-color:#d05050"></div>
<div style="left:1470.5px;top:198.5px;width:4.2px;height:4.2px;background:#e7b416"></div>
<div style="left:1483px;top:211px;width:22px;height:22px;border:1px solid #c0c0c0"></div>
<div class="t" style="left:1628.5px;top:174.6px;font-size:15px;letter-spacing:0.10px;color:#c4c4c4">Pos X</div>
<div class="t" style="left:1720px;top:174.6px;font-size:15px;letter-spacing:0.05px;color:#c4c4c4">Pos Y</div>
<div class="t" style="left:1811px;top:174.6px;font-size:15px;letter-spacing:-0.04px;color:#c4c4c4">Pos Z</div>
<div class="fld" style="left:1627px;top:195.5px;width:89px;height:22px;"></div>
<div class="t" style="left:1631px;top:197.0px;color:#d2d2d2">150</div>
<div class="fld" style="left:1718px;top:195.5px;width:89px;height:22px;"></div>
<div class="t" style="left:1722px;top:197.0px;color:#d2d2d2">-100</div>
<div class="fld" style="left:1810px;top:195.5px;width:89px;height:22px;"></div>
<div class="t" style="left:1814px;top:197.0px;color:#d2d2d2">0</div>
<div class="t" style="left:1628.5px;top:219.6px;font-size:15px;letter-spacing:0.43px;color:#c4c4c4">Width</div>
<div class="t" style="left:1720px;top:219.6px;font-size:15px;letter-spacing:0.44px;color:#c4c4c4">Height</div>
<div class="fld" style="left:1627px;top:240.5px;width:89px;height:22px;"></div>
<div class="t" style="left:1631px;top:242.0px;color:#d2d2d2">200</div>
<div class="fld" style="left:1718px;top:240.5px;width:89px;height:22px;"></div>
<div class="t" style="left:1722px;top:242.0px;color:#d2d2d2">200</div>
<div class="btn" style="left:1835px;top:240px;width:30px;height:22.5px;border-radius:3px 0 0 3px"></div>
<div class="btn" style="left:1866px;top:240px;width:32px;height:22.5px;border-radius:0 3px 3px 0"></div>
<svg style="left:1842px;top:243.5px;" width="16" height="16" viewBox="0 0 16 16"><rect x="2" y="2" width="12" height="12" fill="none" stroke="#a4a4a4" stroke-width="1.4" stroke-dasharray="2.4 2.4"/></svg>
<div class="t" style="left:1876px;top:242.2px;font-size:13.5px;letter-spacing:0.25px;color:#9a9a9a">R</div>
<svg style="left:1448.5px;top:270.5px;" width="8" height="11" viewBox="0 0 8 11"><path d="M0 0V11L8 5.5Z" fill="#6e6e6e"/></svg>
<div class="t" style="left:1462px;top:266.1px;font-size:15px;letter-spacing:0.42px;color:#c4c4c4">Anchors</div>
<div class="t" style="left:1462px;top:292.1px;font-size:15px;letter-spacing:0.33px;color:#c4c4c4">Pivot</div>
<div class="t" style="left:1628px;top:292.1px;font-size:15px;letter-spacing:-0.00px;color:#c4c4c4">X</div>
<div class="fld" style="left:1642px;top:291.0px;width:73px;height:22px;"></div>
<div class="t" style="left:1646px;top:292.5px;color:#d2d2d2">0</div>
<div class="t" style="left:1721px;top:292.1px;font-size:15px;letter-spacing:-0.00px;color:#c4c4c4">Y</div>
<div class="fld" style="left:1733.5px;top:291.0px;width:73.5px;height:22px;"></div>
<div class="t" style="left:1737.5px;top:292.5px;color:#d2d2d2">1</div>
<div class="t" style="left:1462px;top:326.6px;font-size:15px;letter-spacing:0.27px;color:#c4c4c4">Rotation</div>
<div class="t" style="left:1632px;top:326.6px;font-size:15px;letter-spacing:-0.00px;color:#c4c4c4">X</div>
<div class="fld" style="left:1650px;top:325.5px;width:66.5px;height:22px;"></div>
<div class="t" style="left:1654px;top:327.0px;color:#d2d2d2">0</div>
<div class="t" style="left:1723.5px;top:326.6px;font-size:15px;letter-spacing:-0.00px;color:#c4c4c4">Y</div>
<div class="fld" style="left:1741.5px;top:325.5px;width:66.0px;height:22px;"></div>
<div class="t" style="left:1745.5px;top:327.0px;color:#d2d2d2">0</div>
<div class="t" style="left:1814.5px;top:326.6px;font-size:15px;letter-spacing:0.34px;color:#c4c4c4">Z</div>
<div class="fld" style="left:1832.5px;top:325.5px;width:66.5px;height:22px;"></div>
<div class="t" style="left:1836.5px;top:327.0px;color:#d2d2d2">0</div>
<div class="t" style="left:1462px;top:351.6px;font-size:15px;letter-spacing:0.10px;color:#c4c4c4">Scale</div>
<div class="t" style="left:1632px;top:351.6px;font-size:15px;letter-spacing:-0.00px;color:#c4c4c4">X</div>
<div class="fld" style="left:1650px;top:350.5px;width:66.5px;height:22px;"></div>
<div class="t" style="left:1654px;top:352.0px;color:#d2d2d2">1</div>
<div class="t" style="left:1723.5px;top:351.6px;font-size:15px;letter-spacing:-0.00px;color:#c4c4c4">Y</div>
<div class="fld" style="left:1741.5px;top:350.5px;width:66.0px;height:22px;"></div>
<div class="t" style="left:1745.5px;top:352.0px;color:#d2d2d2">1</div>
<div class="t" style="left:1814.5px;top:351.6px;font-size:15px;letter-spacing:0.34px;color:#c4c4c4">Z</div>
<div class="fld" style="left:1832.5px;top:350.5px;width:66.5px;height:22px;"></div>
<div class="t" style="left:1836.5px;top:352.0px;color:#d2d2d2">1</div>
<svg style="left:1604px;top:354px;" width="17" height="15" viewBox="0 0 17 15"><g fill="none" stroke="#c4c4c4" stroke-width="1.4"><path d="M7 4H4.6a3.4 3.4 0 0 0 0 6.8H7M10 4h2.4a3.4 3.4 0 0 1 0 6.8H10M2 1.5L15 13.5"/></g></svg>
<div style="left:1438px;top:385px;width:466px;height:1px;background:#1f1f1f"></div>
<div style="left:1438px;top:386px;width:466px;height:26px;background:#3e3e3e"></div>
<svg style="left:1445.5px;top:395.0px;" width="11" height="8" viewBox="0 0 11 8"><path d="M0 0H11L5.5 8Z" fill="#6e6e6e"/></svg>
<svg style="left:1462px;top:391px;" width="22" height="15" viewBox="0 0 22 15"><path d="M1 7.5C5 1.2 17 1.2 21 7.5C17 13.8 5 13.8 1 7.5Z" fill="none" stroke="#d8d8d8" stroke-width="1.5"/><circle cx="11" cy="7.3" r="3" fill="none" stroke="#d8d8d8" stroke-width="1.5"/></svg>
<div class="t" style="left:1513px;top:389.1px;font-size:15px;letter-spacing:0.17px;font-weight:bold;color:#e0e0e0">Canvas Renderer</div>
<svg style="left:1831.5px;top:392.0px;" width="14" height="14" viewBox="0 0 14 14"><circle cx="7" cy="7" r="6.6" fill="#c4c4c4"/><text x="7" y="11" font-size="11" font-weight="bold" font-family="Liberation Sans,sans-serif" text-anchor="middle" fill="#3c3c3c">?</text></svg>
<svg style="left:1856.5px;top:392.0px;" width="14" height="14" viewBox="0 0 14 14"><g stroke="#c4c4c4" stroke-width="1.5" fill="none"><path d="M1 4H8M11 4H13M1 10H4M7 10H13M9.5 1V7M5.5 7V13"/></g></svg>
<svg style="left:1886.5px;top:392.0px;" width="4" height="14" viewBox="0 0 4 14"><g fill="#c4c4c4"><circle cx="2" cy="2.4" r="1.35"/><circle cx="2" cy="7" r="1.35"/><circle cx="2" cy="11.6" r="1.35"/></g></svg>
<div class="t" style="left:1462px;top:420.1px;font-size:15px;letter-spacing:0.43px;color:#c4c4c4">Cull Transparent Mesh</div>
<div class="chk" style="left:1630px;top:420.3px;width:17px;height:18px;"></div>
<svg style="left:1632.5px;top:424.3px;" width="12" height="10" viewBox="0 0 12 10"><path d="M1.2 5.2L4.4 8.4L10.8 1.4" fill="none" stroke="#e4e4e4" stroke-width="2"/></svg>
<div style="left:1438px;top:451px;width:466px;height:1px;background:#1f1f1f"></div>
<div style="left:1438px;top:452px;width:466px;height:27px;background:#3e3e3e"></div>
<svg style="left:1445.5px;top:461.5px;" width="11" height="8" viewBox="0 0 11 8"><path d="M0 0H11L5.5 8Z" fill="#6e6e6e"/></svg>
<svg style="left:1463px;top:457px;" width="19" height="17" viewBox="0 0 19 17"><g fill="none" stroke="#d0d0d0" stroke-width="1.3"><rect x="3" y="3" width="13" height="11"/></g><g fill="#d0d0d0"><rect x="0.6" y="0.8" width="3.6" height="3.6"/><rect x="14.8" y="0.8" width="3.6" height="3.6"/><rect x="0.6" y="12.6" width="3.6" height="3.6"/><rect x="14.8" y="12.6" width="3.6" height="3.6"/><path d="M4 13L8 8.4L10.4 11L12.2 9.4L15 13Z"/><circle cx="7" cy="6.4" r="1.2"/></g></svg>
<div class="chk" style="left:1488px;top:456.5px;width:18px;height:18px;"></div>
<svg style="left:1491px;top:460.5px;" width="12" height="10" viewBox="0 0 12 10"><path d="M1.2 5.2L4.4 8.4L10.8 1.4" fill="none" stroke="#e4e4e4" stroke-width="2"/></svg>
<div class="t" style="left:1513px;top:455.6px;font-size:15px;letter-spacing:0.33px;font-weight:bold;color:#e0e0e0">Image</div>
<svg style="left:1831.5px;top:458.5px;" width="14" height="14" viewBox="0 0 14 14"><circle cx="7" cy="7" r="6.6" fill="#c4c4c4"/><text x="7" y="11" font-size="11" font-weight="bold" font-family="Liberation Sans,sans-serif" text-anchor="middle" fill="#3c3c3c">?</text></svg>
<svg style="left:1856.5px;top:458.5px;" width="14" height="14" viewBox="0 0 14 14"><g stroke="#c4c4c4" stroke-width="1.5" fill="none"><path d="M1 4H8M11 4H13M1 10H4M7 10H13M9.5 1V7M5.5 7V13"/></g></svg>
<svg style="left:1886.5px;top:458.5px;" width="4" height="14" viewBox="0 0 4 14"><g fill="#c4c4c4"><circle cx="2" cy="2.4" r="1.35"/><circle cx="2" cy="7" r="1.35"/><circle cx="2" cy="11.6" r="1.35"/></g></svg>
<div class="t" style="left:1462px;top:487.1px;font-size:15px;letter-spacing:0.30px;color:#c4c4c4">Source Image</div>
<div class="fld" style="left:1630px;top:486px;width:268px;height:21px;"></div>
<div style="left:1875px;top:487px;width:22px;height:19px;background:#373737;border-radius:0 2px 2px 0"></div>
<svg style="left:1634px;top:489px;" width="16" height="16" viewBox="0 0 16 16"><rect x="3" y="3" width="10" height="10" fill="none" stroke="#9b7fd8" stroke-width="1.3"/><g fill="#9b7fd8"><rect x="1" y="1" width="3" height="3"/><rect x="12" y="1" width="3" height="3"/><rect x="1" y="12" width="3" height="3"/><rect x="12" y="12" width="3" height="3"/></g><circle cx="8" cy="8" r="2.6" fill="#e0e0e0"/></svg>
<div class="t" style="left:1650px;top:487.6px;font-size:15px;letter-spacing:0.24px;color:#d2d2d2">Earth_4k</div>
<svg style="left:1879.5px;top:489.5px;" width="14" height="14" viewBox="0 0 14 14"><circle cx="7" cy="7" r="5.6" fill="none" stroke="#c4c4c4" stroke-width="1.3"/><circle cx="7" cy="7" r="2" fill="#c4c4c4"/></svg>
<div class="t" style="left:1462px;top:512.1px;font-size:15px;letter-spacing:0.43px;color:#c4c4c4">Color</div>
<div class="fld" style="left:1630px;top:510px;width:268px;height:22px;"></div>
<div style="left:1632px;top:511.5px;width:243px;height:19.5px;background:#ffffff"></div>
<svg style="left:1879px;top:513px;" width="17" height="17" viewBox="0 0 17 17"><path d="M2 15L3 11.6L9.4 5.2L11.8 7.6L5.4 14Z" fill="none" stroke="#c4c4c4" stroke-width="1.3"/><path d="M9 3.6L13.4 8M10.6 5L13 2.2a1.6 1.6 0 0 1 2.2 2.2L12.6 6.8Z" fill="#c4c4c4" stroke="#c4c4c4" stroke-width="1.2"/></svg>
<div class="t" style="left:1462px;top:537.1px;font-size:15px;letter-spacing:0.33px;color:#c4c4c4">Material</div>
<div class="fld" style="left:1630px;top:536px;width:268px;height:21px;"></div>
<div style="left:1875px;top:537px;width:22px;height:19px;background:#373737;border-radius:0 2px 2px 0"></div>
<div class="t" style="left:1634px;top:537.6px;font-size:15px;letter-spacing:0.37px;color:#b4b4b4">None (Material)</div>
<svg style="left:1879.5px;top:539.5px;" width="14" height="14" viewBox="0 0 14 14"><circle cx="7" cy="7" r="5.6" fill="none" stroke="#c4c4c4" stroke-width="1.3"/><circle cx="7" cy="7" r="2" fill="#c4c4c4"/></svg>
<div class="t" style="left:1462px;top:562.1px;font-size:15px;letter-spacing:0.52px;color:#c4c4c4">Raycast Target</div>
<div class="chk" style="left:1630px;top:562.3px;width:17px;height:18px;"></div>
<svg style="left:1632.5px;top:566.3px;" width="12" height="10" viewBox="0 0 12 10"><path d="M1.2 5.2L4.4 8.4L10.8 1.4" fill="none" stroke="#e4e4e4" stroke-width="2"/></svg>
<svg style="left:1448.5px;top:591.0px;" width="8" height="11" viewBox="0 0 8 11"><path d="M0 0V11L8 5.5Z" fill="#6e6e6e"/></svg>
<div class="t" style="left:1462px;top:587.1px;font-size:15px;letter-spacing:0.31px;color:#c4c4c4">Raycast Padding</div>
<div class="t" style="left:1462px;top:615.1px;font-size:15px;letter-spacing:0.35px;color:#c4c4c4">Maskable</div>
<div class="chk" style="left:1630px;top:615.3px;width:17px;height:18px;"></div>
<svg style="left:1632.5px;top:619.3px;" width="12" height="10" viewBox="0 0 12 10"><path d="M1.2 5.2L4.4 8.4L10.8 1.4" fill="none" stroke="#e4e4e4" stroke-width="2"/></svg>
<div class="t" style="left:1462px;top:640.1px;font-size:15px;letter-spacing:0.49px;color:#c4c4c4">Image Type</div>
<div style="left:1630px;top:639px;width:268px;height:21px;background:#515151;border-radius:3px;border:1px solid #303030"></div>
<div class="t" style="left:1635px;top:639.6px;font-size:15px;letter-spacing:0.36px;color:#e0e0e0">Simple</div>
<svg style="left:1881.0px;top:646.5px;" width="10" height="6" viewBox="0 0 10 6"><path d="M0 0H10L5.0 6Z" fill="#d0d0d0"/></svg>
<div class="t" style="left:1480px;top:664.6px;font-size:15px;letter-spacing:0.34px;color:#c4c4c4">Use Sprite Mesh</div>
<div class="chk" style="left:1630px;top:664.8px;width:17px;height:18px;"></div>
<div class="t" style="left:1480px;top:689.6px;font-size:15px;letter-spacing:0.45px;color:#c4c4c4">Preserve Aspect</div>
<div class="chk" style="left:1630px;top:689.8px;width:17px;height:18px;"></div>
<div class="btn" style="left:1629px;top:714.5px;width:269px;height:20.5px;border-radius:3px;border:1px solid #303030"></div>
<div class="t" style="left:1710px;top:714.6px;font-size:15px;letter-spacing:0.36px;color:#e4e4e4">Set Native Size</div>
<div style="left:1438px;top:746px;width:466px;height:1px;background:#1f1f1f"></div>
<div style="left:1438px;top:747px;width:466px;height:68px;background:#3a3a3a"></div>
<div style="left:1458px;top:755px;width:40px;height:40px;background:#4c4c4c"></div>
<div style="left:1463px;top:760px;width:30px;height:30px;background:#ffffff"></div>
<div class="t" style="left:1507px;top:753.1px;color:#8a8a8a">De</div>
<div class="t" style="left:1505px;top:783.1px;color:#787878">Sha</div>
<svg style="left:1447px;top:794.5px;" width="8" height="11" viewBox="0 0 8 11"><path d="M0 0V11L8 5.5Z" fill="#5a5a5a"/></svg>
<svg style="left:1867px;top:756px;" width="14" height="14" viewBox="0 0 14 14"><circle cx="7" cy="7" r="6.6" fill="#c4c4c4"/><text x="7" y="11" font-size="11" font-weight="bold" font-family="Liberation Sans,sans-serif" text-anchor="middle" fill="#3c3c3c">?</text></svg>
<svg style="left:1892.5px;top:756px;" width="4" height="14" viewBox="0 0 4 14"><g fill="#c4c4c4"><circle cx="2" cy="2.4" r="1.35"/><circle cx="2" cy="7" r="1.35"/><circle cx="2" cy="11.6" r="1.35"/></g></svg>
<div class="btn" style="left:1800px;top:784px;width:39px;height:20px;border-radius:3px;border:1px solid #303030"></div>
<div class="t" style="left:1818px;top:783.1px;color:#d0d0d0">t...</div>
<div class="btn" style="left:1846px;top:784px;width:52px;height:20px;border-radius:3px;border:1px solid #303030"></div>
<svg style="left:1856px;top:787px;" width="15" height="14" viewBox="0 0 15 14"><g fill="#c4c4c4"><rect x="0.5" y="1" width="2" height="2"/><rect x="4.5" y="1.2" width="9.5" height="1.5"/><rect x="3" y="6" width="2" height="2"/><rect x="7" y="6.2" width="7" height="1.5"/><rect x="3" y="11" width="2" height="2"/><rect x="7" y="11.2" width="7" height="1.5"/></g></svg>
<svg style="left:1881.0px;top:791.0px;" width="10" height="6" viewBox="0 0 10 6"><path d="M0 0H10L5.0 6Z" fill="#d0d0d0"/></svg>
<div style="left:1438px;top:815px;width:466px;height:1px;background:#1f1f1f"></div>
<div style="left:1438px;top:816px;width:466px;height:13px;background:#333333"></div>
<div style="left:1438px;top:829px;width:466px;height:1px;background:#242424"></div>
<div style="left:1904px;top:129px;width:15px;height:756px;background:#353535"></div>
<svg style="left:1907px;top:138px;" width="10" height="7" viewBox="0 0 10 7"><path d="M0 7H10L5 0Z" fill="#c4c4c4"/></svg>
<svg style="left:1907px;top:871px;" width="10" height="7" viewBox="0 0 10 7"><path d="M0 0H10L5 7Z" fill="#c4c4c4"/></svg>
<div style="left:1907px;top:205px;width:12px;height:658px;background:#5f5f5f;border-radius:6px"></div>
<div style="left:1438px;top:885px;width:481px;height:1px;background:#1f1f1f"></div>
<div style="left:1438px;top:886px;width:481px;height:26px;background:#3c3c3c"></div>
<div style="left:1444px;top:886px;width:1px;height:26px;background:#2c2c2c"></div>
<div style="left:1506px;top:886px;width:1px;height:26px;background:#2c2c2c"></div>
<div class="t" style="left:1447.5px;top:889.1px;font-size:15px;letter-spacing:0.53px;font-weight:bold;color:#e0e0e0">Earth</div>
<svg style="left:1490.0px;top:896.5px;" width="10" height="6" viewBox="0 0 10 6"><path d="M0 0H10L5.0 6Z" fill="#d0d0d0"/></svg>
<div style="left:1511px;top:897px;width:386px;height:1px;background:#5c5c5c"></div>
<div style="left:1511px;top:900px;width:386px;height:1px;background:#5c5c5c"></div>
<div style="left:1902px;top:886px;width:1px;height:26px;background:#2c2c2c"></div>
<svg style="left:1909px;top:892px;" width="4" height="14" viewBox="0 0 4 14"><g fill="#c4c4c4"><circle cx="2" cy="2.4" r="1.35"/><circle cx="2" cy="7" r="1.35"/><circle cx="2" cy="11.6" r="1.35"/></g></svg>
<div style="left:1438px;top:912px;width:481px;height:192px;background:#2a2a2a"></div>
<div style="left:0px;top:697px;width:1436px;height:3px;background:#161616"></div>
<div style="left:0px;top:700px;width:1436px;height:31px;background:#161616"></div>
<svg style="left:11px;top:709px;" width="15" height="14" viewBox="0 0 15 14"><g fill="none" stroke="#b8b8b8" stroke-width="1.3"><rect x="1" y="1" width="13" height="12"/></g><g fill="#b8b8b8"><rect x="3" y="3.4" width="9" height="1.6"/><rect x="3" y="6.4" width="9" height="1.6"/><rect x="3" y="9.4" width="9" height="1.6"/></g></svg>
<div class="t" style="left:31px;top:706.1px;font-size:15px;letter-spacing:0.35px;color:#b8b8b8">Console</div>
<div class="tab" style="left:125px;top:700px;width:110px;height:31px;"></div>
<svg style="left:135px;top:710px;" width="19" height="12" viewBox="0 0 19 12"><path d="M5 1H14a5 5 0 0 1 0 10H5A5 5 0 0 1 5 1Z" fill="#c4c4c4"/><path d="M5.5 3.4V8.6M2.9 6H8.1" stroke="#383838" stroke-width="1.5"/><circle cx="12.4" cy="7.2" r="1.1" fill="#383838"/><circle cx="15" cy="4.8" r="1.1" fill="#383838"/></svg>
<div class="t" style="left:157px;top:706.1px;font-size:15px;letter-spacing:0.16px;">Game</div>
<svg style="left:638px;top:708px;" width="4" height="14" viewBox="0 0 4 14"><g fill="#c4c4c4"><circle cx="2" cy="2.4" r="1.35"/><circle cx="2" cy="7" r="1.35"/><circle cx="2" cy="11.6" r="1.35"/></g></svg>
<div style="left:0px;top:730px;width:657px;height:26px;background:#3c3c3c"></div>
<div style="left:0px;top:755px;width:657px;height:1px;background:#232323"></div>
<div class="t" style="left:5px;top:733.1px;font-size:15px;letter-spacing:0.04px;color:#c8c8c8">Game</div>
<svg style="left:97.0px;top:740.5px;" width="10" height="6" viewBox="0 0 10 6"><path d="M0 0H10L5.0 6Z" fill="#c4c4c4"/></svg>
<div style="left:113px;top:731px;width:1px;height:24px;background:#2c2c2c"></div>
<div class="t" style="left:125px;top:733.1px;font-size:15px;letter-spacing:0.14px;color:#c8c8c8">Display 1</div>
<svg style="left:204.0px;top:740.5px;" width="10" height="6" viewBox="0 0 10 6"><path d="M0 0H10L5.0 6Z" fill="#c4c4c4"/></svg>
<div style="left:220px;top:731px;width:1px;height:24px;background:#2c2c2c"></div>
<div class="t" style="left:225px;top:733.1px;font-size:15px;letter-spacing:0.40px;color:#c8c8c8">2160x1080 Portrait</div>
<svg style="left:404.0px;top:740.5px;" width="10" height="6" viewBox="0 0 10 6"><path d="M0 0H10L5.0 6Z" fill="#c4c4c4"/></svg>
<div style="left:420px;top:731px;width:1px;height:24px;background:#2c2c2c"></div>
<div class="t" style="left:429px;top:733.6px;font-size:15px;letter-spacing:0.20px;color:#c8c8c8">Scale</div>
<div style="left:481px;top:743px;width:31px;height:2px;background:#5e5e5e"></div>
<div style="left:476px;top:738.5px;width:11px;height:11px;background:#bdbdbd;border-radius:6px"></div>
<div class="t" style="left:520px;top:733.6px;font-size:15px;letter-spacing:0.26px;color:#c8c8c8">0.16x</div>
<div style="left:571px;top:731px;width:1px;height:24px;background:#2c2c2c"></div>
<div class="clip" style="left:572px;top:731px;width:85px;height:24px"><div class="t" style="left:4px;top:2.6px;font-size:15px;letter-spacing:-0.07px;color:#c8c8c8">Play Focused</div></div>
<div style="left:0px;top:756px;width:657px;height:357px;background:#282828"></div>
<svg style="left:239px;top:757px;" width="178" height="355" viewBox="0 0 178 355"><rect width="178" height="355" filter="url(#granite2)"/></svg>
<div class="t" style="left:267.5px;top:780px;height:26px;line-height:26px;font-size:21px;color:#f28a12;letter-spacing:0.45px">Planetes AR</div>
<svg style="left:272px;top:835px;" width="45.5" height="44" viewBox="0 0 45.5 44"><rect width="45.5" height="44" fill="#2277ad"/><g transform="scale(0.4550,0.8800)"><g fill="#8fa672"><path d="M6 9L16 6L28 6L31 11L26 15L24 19L21 23L17 21L14 15L9 13Z"/><path d="M23 26L29 25L34 29L31 37L27 46L25 40L24 33Z"/><path d="M46 18L52 17L57 19L61 26L57 37L53 39L50 31L46 24Z" fill="#b6a871"/><path d="M45 9L52 6L62 4L84 5L93 9L88 16L81 19L77 25L72 19L66 21L60 17L55 15L48 14Z" fill="#a3a88a"/><path d="M80 31L89 30L91 36L84 39L80 36Z" fill="#c19a68"/></g><path d="M32 3L41 3L38 9L34 8Z" fill="#eef1f4"/><rect width="100" height="3.2" fill="#e9eef3"/><path d="M0 50V45L12 44L30 45.5L50 44L70 45L88 43.5L100 45V50Z" fill="#e8ecf1"/></g><rect width="45.5" height="44" filter="url(#clouds)" opacity="0.8"/></svg>
<div style="left:657px;top:700px;width:2px;height:414px;background:#161616"></div>
<div class="tab" style="left:659px;top:700px;width:119px;height:31px;"></div>
<svg style="left:671px;top:708px;" width="17" height="15" viewBox="0 0 17 15"><path d="M1 1.5a1 1 0 0 1 1-1h5l2.6 2.6H15a1 1 0 0 1 1 1V13.5a1 1 0 0 1-1 1H2a1 1 0 0 1-1-1Z" fill="#c8c8c8"/></svg>
<div class="t" style="left:691.5px;top:706.1px;font-size:15px;letter-spacing:0.40px;">Project</div>
<svg style="left:1391.5px;top:708px;" width="12" height="14" viewBox="0 0 12 14"><g fill="none" stroke="#c4c4c4" stroke-width="1.2"><path d="M2.6 7.4V4.6a2.7 2.7 0 0 1 5.4 -0.4"/><rect x="1.2" y="7.4" width="9.6" height="5.4" rx="0.6"/></g></svg>
<svg style="left:1417px;top:708px;" width="4" height="14" viewBox="0 0 4 14"><g fill="#c4c4c4"><circle cx="2" cy="2.4" r="1.35"/><circle cx="2" cy="7" r="1.35"/><circle cx="2" cy="11.6" r="1.35"/></g></svg>
<div class="pnl" style="left:659px;top:730px;width:777px;height:383px;"></div>
<div style="left:659px;top:755px;width:777px;height:1px;background:#232323"></div>
<svg style="left:667px;top:735px;" width="16" height="16" viewBox="0 0 16 16"><path d="M8 0.5V15.5M0.5 8H15.5" stroke="#d0d0d0" stroke-width="1.8"/></svg>
<svg style="left:687.5px;top:740.0px;" width="10" height="6" viewBox="0 0 10 6"><path d="M0 0H10L5.0 6Z" fill="#c4c4c4"/></svg>
<div class="fld" style="left:855px;top:733.5px;width:375px;height:19.5px;border-radius:3px 0 0 3px"></div>
<svg style="left:860px;top:738px;" width="12" height="12" viewBox="0 0 12 12"><circle cx="4.4" cy="4.4" r="3" fill="none" stroke="#c4c4c4" stroke-width="1.5"/><path d="M6.6 6.6L10.4 10.4" stroke="#c4c4c4" stroke-width="1.7"/></svg>
<div style="left:1230px;top:733.5px;width:20px;height:19.5px;background:#303030;border:1px solid #212121;border-left:none;border-radius:0 3px 3px 0"></div>
<svg style="left:1233px;top:736.5px;" width="14" height="14" viewBox="0 0 14 14"><g fill="none" stroke="#b4b4b4" stroke-width="1.2"><path d="M3.4 0.8H13.2V10.2H3.4Z"/><path d="M0.8 8.4H5.6V13.2H0.8Z" fill="#303030"/><path d="M6.4 7.4L10.8 3.2M7.6 3H11V6.4"/></g></svg>
<div style="left:1253px;top:731px;width:1px;height:24px;background:#2c2c2c"></div>
<div style="left:1285px;top:731px;width:1px;height:24px;background:#2c2c2c"></div>
<div style="left:1318px;top:731px;width:1px;height:24px;background:#2c2c2c"></div>
<div style="left:1350px;top:731px;width:1px;height:24px;background:#2c2c2c"></div>
<div style="left:1384px;top:731px;width:1px;height:24px;background:#2c2c2c"></div>
<svg style="left:1261px;top:736px;" width="16" height="15.2" viewBox="0 0 18 17"><g fill="#c4c4c4"><circle cx="5.4" cy="11.6" r="4.2"/><rect x="3" y="0.8" width="6" height="5.4"/><path d="M13.2 4L17.2 11.4H9.2Z"/></g></svg>
<svg style="left:1294.5px;top:736.5px;" width="15" height="14.2" viewBox="0 0 18 17"><path d="M1.5 9.5L9 2H16V9L8.5 16.5Z" fill="#c4c4c4"/><circle cx="12.6" cy="5.4" r="1.4" fill="#383838"/></svg>
<svg style="left:1325px;top:734px;" width="18" height="18" viewBox="0 0 18 18"><circle cx="9" cy="9" r="8.4" fill="#d4d4d4"/><rect x="7.8" y="3.6" width="2.4" height="7" rx="1" fill="#383838"/><circle cx="9" cy="13.2" r="1.4" fill="#383838"/></svg>
<svg style="left:1360px;top:736.5px;" width="15" height="14" viewBox="0 0 17 16"><path d="M8.5 0.6L10.9 5.8L16.5 6.4L12.3 10.2L13.5 15.8L8.5 13L3.5 15.8L4.7 10.2L0.5 6.4L6.1 5.8Z" fill="#8c8c8c"/></svg>
<svg style="left:1390px;top:737px;" width="20" height="13" viewBox="0 0 20 13"><path d="M1 6.5C4.6 1 15.4 1 19 6.5C15.4 12 4.6 12 1 6.5Z" fill="#5c5c5c"/><circle cx="10" cy="6.2" r="3" fill="#474747"/></svg>
<div class="t" style="left:1412.5px;top:733.6px;font-size:15px;letter-spacing:0.66px;color:#c8c8c8">28</div>
<div class="clip" style="left:659px;top:756px;width:242px;height:356px">
<div style="left:0px;top:217px;width:242px;height:20px;background:#4d4d4d"></div>
<svg style="left:4.5px;top:22px;" width="11" height="8" viewBox="0 0 11 8"><path d="M0 0H11L5.5 8Z" fill="#6e6e6e"/></svg>
<svg style="left:22px;top:20.5px;" width="18" height="13" viewBox="0 0 18 13"><path d="M1 11.5V1.4a.8.8 0 0 1 .8-.8h4l1.4 1.8H13a.8.8 0 0 1 .8.8V5" fill="none" stroke="#c4c4c4" stroke-width="1.4"/><path d="M4 5.4H17.6L15 12.6H0.8Z" fill="#c4c4c4"/></svg>
<div class="t" style="left:44.5px;top:16.1px;font-size:15px;letter-spacing:0.22px;font-weight:bold;color:#dcdcdc">Assets</div>
<svg style="left:22.5px;top:42px;" width="11" height="8" viewBox="0 0 11 8"><path d="M0 0H11L5.5 8Z" fill="#6e6e6e"/></svg>
<svg style="left:38.5px;top:40.5px;" width="18" height="13" viewBox="0 0 18 13"><path d="M1 11.5V1.4a.8.8 0 0 1 .8-.8h4l1.4 1.8H13a.8.8 0 0 1 .8.8V5" fill="none" stroke="#c4c4c4" stroke-width="1.4"/><path d="M4 5.4H17.6L15 12.6H0.8Z" fill="#c4c4c4"/></svg>
<div class="t" style="left:60.5px;top:36.1px;font-size:15px;letter-spacing:0.40px;">Planets of the Solar System 3D</div>
<svg style="left:57px;top:60.5px;" width="16" height="13" viewBox="0 0 16 13"><path d="M0.5 1.2a.8.8 0 0 1 .8-.8h4.4l1.5 2H14.7a.8.8 0 0 1 .8.8V11.7a.8.8 0 0 1-.8.8H1.3a.8.8 0 0 1-.8-.8Z" fill="#c4c4c4"/></svg>
<div class="t" style="left:77px;top:56.1px;font-size:15px;letter-spacing:0.39px;">Geometry</div>
<svg style="left:57px;top:80.5px;" width="16" height="13" viewBox="0 0 16 13"><path d="M0.5 1.2a.8.8 0 0 1 .8-.8h4.4l1.5 2H14.7a.8.8 0 0 1 .8.8V11.7a.8.8 0 0 1-.8.8H1.3a.8.8 0 0 1-.8-.8Z" fill="#c4c4c4"/></svg>
<div class="t" style="left:77px;top:76.1px;font-size:15px;letter-spacing:0.35px;">Materials</div>
<svg style="left:57px;top:100.5px;" width="16" height="13" viewBox="0 0 16 13"><path d="M0.5 1.2a.8.8 0 0 1 .8-.8h4.4l1.5 2H14.7a.8.8 0 0 1 .8.8V11.7a.8.8 0 0 1-.8.8H1.3a.8.8 0 0 1-.8-.8Z" fill="#c4c4c4"/></svg>
<div class="t" style="left:77px;top:96.1px;font-size:15px;letter-spacing:0.33px;">Prefabs</div>
<svg style="left:57px;top:120.5px;" width="16" height="13" viewBox="0 0 16 13"><path d="M0.5 1.2a.8.8 0 0 1 .8-.8h4.4l1.5 2H14.7a.8.8 0 0 1 .8.8V11.7a.8.8 0 0 1-.8.8H1.3a.8.8 0 0 1-.8-.8Z" fill="#c4c4c4"/></svg>
<div class="t" style="left:77px;top:116.1px;font-size:15px;letter-spacing:0.16px;">Scenes</div>
<svg style="left:57px;top:140.5px;" width="16" height="13" viewBox="0 0 16 13"><path d="M0.5 1.2a.8.8 0 0 1 .8-.8h4.4l1.5 2H14.7a.8.8 0 0 1 .8.8V11.7a.8.8 0 0 1-.8.8H1.3a.8.8 0 0 1-.8-.8Z" fill="#c4c4c4"/></svg>
<div class="t" style="left:77px;top:136.1px;font-size:15px;letter-spacing:0.47px;">Settings</div>
<svg style="left:57px;top:160.5px;" width="16" height="13" viewBox="0 0 16 13"><path d="M0.5 1.2a.8.8 0 0 1 .8-.8h4.4l1.5 2H14.7a.8.8 0 0 1 .8.8V11.7a.8.8 0 0 1-.8.8H1.3a.8.8 0 0 1-.8-.8Z" fill="#c4c4c4"/></svg>
<div class="t" style="left:77px;top:156.1px;font-size:15px;letter-spacing:0.30px;">Shaders</div>
<svg style="left:39.5px;top:182px;" width="11" height="8" viewBox="0 0 11 8"><path d="M0 0H11L5.5 8Z" fill="#6e6e6e"/></svg>
<svg style="left:56px;top:180.5px;" width="18" height="13" viewBox="0 0 18 13"><path d="M1 11.5V1.4a.8.8 0 0 1 .8-.8h4l1.4 1.8H13a.8.8 0 0 1 .8.8V5" fill="none" stroke="#c4c4c4" stroke-width="1.4"/><path d="M4 5.4H17.6L15 12.6H0.8Z" fill="#c4c4c4"/></svg>
<div class="t" style="left:77px;top:176.1px;font-size:15px;letter-spacing:0.66px;">Textures</div>
<svg style="left:74.5px;top:200.5px;" width="16" height="13" viewBox="0 0 16 13"><path d="M0.5 1.2a.8.8 0 0 1 .8-.8h4.4l1.5 2H14.7a.8.8 0 0 1 .8.8V11.7a.8.8 0 0 1-.8.8H1.3a.8.8 0 0 1-.8-.8Z" fill="#c4c4c4"/></svg>
<div class="t" style="left:95px;top:196.1px;font-size:15px;letter-spacing:-0.58px;">FX</div>
<svg style="left:74.5px;top:220.5px;" width="16" height="13" viewBox="0 0 16 13"><path d="M0.5 1.2a.8.8 0 0 1 .8-.8h4.4l1.5 2H14.7a.8.8 0 0 1 .8.8V11.7a.8.8 0 0 1-.8.8H1.3a.8.8 0 0 1-.8-.8Z" fill="#c4c4c4"/></svg>
<div class="t" style="left:95px;top:216.1px;font-size:15px;letter-spacing:0.28px;">Planets</div>
<svg style="left:39.5px;top:240.5px;" width="16" height="13" viewBox="0 0 16 13"><path d="M0.5 1.2a.8.8 0 0 1 .8-.8h4.4l1.5 2H14.7a.8.8 0 0 1 .8.8V11.7a.8.8 0 0 1-.8.8H1.3a.8.8 0 0 1-.8-.8Z" fill="#c4c4c4"/></svg>
<div class="t" style="left:60.5px;top:236.1px;font-size:15px;letter-spacing:0.08px;">Scenes</div>
<svg style="left:39.5px;top:260.5px;" width="16" height="13" viewBox="0 0 16 13"><path d="M0.5 1.2a.8.8 0 0 1 .8-.8h4.4l1.5 2H14.7a.8.8 0 0 1 .8.8V11.7a.8.8 0 0 1-.8.8H1.3a.8.8 0 0 1-.8-.8Z" fill="#c4c4c4"/></svg>
<div class="t" style="left:60.5px;top:256.1px;font-size:15px;letter-spacing:0.41px;">Settings</div>
<svg style="left:22.5px;top:282px;" width="11" height="8" viewBox="0 0 11 8"><path d="M0 0H11L5.5 8Z" fill="#6e6e6e"/></svg>
<svg style="left:38.5px;top:280.5px;" width="18" height="13" viewBox="0 0 18 13"><path d="M1 11.5V1.4a.8.8 0 0 1 .8-.8h4l1.4 1.8H13a.8.8 0 0 1 .8.8V5" fill="none" stroke="#c4c4c4" stroke-width="1.4"/><path d="M4 5.4H17.6L15 12.6H0.8Z" fill="#c4c4c4"/></svg>
<div class="t" style="left:60.5px;top:276.1px;font-size:15px;letter-spacing:0.48px;">TextMesh Pro</div>
<svg style="left:57px;top:300.5px;" width="16" height="13" viewBox="0 0 16 13"><path d="M0.5 1.2a.8.8 0 0 1 .8-.8h4.4l1.5 2H14.7a.8.8 0 0 1 .8.8V11.7a.8.8 0 0 1-.8.8H1.3a.8.8 0 0 1-.8-.8Z" fill="#c4c4c4"/></svg>
<div class="t" style="left:77px;top:296.1px;font-size:15px;letter-spacing:0.30px;">Fonts</div>
<svg style="left:39.5px;top:322px;" width="11" height="8" viewBox="0 0 11 8"><path d="M0 0H11L5.5 8Z" fill="#6e6e6e"/></svg>
<svg style="left:56px;top:320.5px;" width="18" height="13" viewBox="0 0 18 13"><path d="M1 11.5V1.4a.8.8 0 0 1 .8-.8h4l1.4 1.8H13a.8.8 0 0 1 .8.8V5" fill="none" stroke="#c4c4c4" stroke-width="1.4"/><path d="M4 5.4H17.6L15 12.6H0.8Z" fill="#c4c4c4"/></svg>
<div class="t" style="left:77px;top:316.1px;font-size:15px;letter-spacing:0.26px;">Resources</div>
<svg style="left:74.5px;top:340.5px;" width="16" height="13" viewBox="0 0 16 13"><path d="M0.5 1.2a.8.8 0 0 1 .8-.8h4.4l1.5 2H14.7a.8.8 0 0 1 .8.8V11.7a.8.8 0 0 1-.8.8H1.3a.8.8 0 0 1-.8-.8Z" fill="#c4c4c4"/></svg>
<div class="t" style="left:95px;top:336.1px;font-size:15px;letter-spacing:0.31px;">Fonts &amp; Materials</div>
</div>
<div style="left:901px;top:756px;width:17px;height:356px;background:#353535"></div>
<svg style="left:905px;top:763px;" width="10" height="7" viewBox="0 0 10 7"><path d="M0 7H10L5 0Z" fill="#c4c4c4"/></svg>
<svg style="left:905px;top:1099px;" width="10" height="7" viewBox="0 0 10 7"><path d="M0 0H10L5 7Z" fill="#c4c4c4"/></svg>
<div style="left:904.5px;top:798px;width:12.5px;height:113px;background:#5f5f5f;border-radius:6px"></div>
<div style="left:918px;top:756px;width:2px;height:356px;background:#232323"></div>
<div style="left:920px;top:756px;width:516px;height:25px;background:#3c3c3c"></div>
<div style="left:920px;top:781px;width:516px;height:306px;background:#333333"></div>
<div style="left:920px;top:1087px;width:516px;height:25px;background:#3c3c3c"></div>
<div class="t" style="left:924px;top:758.6px;font-size:15px;letter-spacing:0.41px;">Assets</div>
<svg style="left:979px;top:763px;" width="8" height="11" viewBox="0 0 8 11"><path d="M1.5 1L6.5 5.5L1.5 10" fill="none" stroke="#b0b0b0" stroke-width="1.5"/></svg>
<div class="t" style="left:994.5px;top:758.6px;font-size:15px;letter-spacing:0.39px;">Planets of the Solar System 3D</div>
<svg style="left:1222px;top:763px;" width="8" height="11" viewBox="0 0 8 11"><path d="M1.5 1L6.5 5.5L1.5 10" fill="none" stroke="#b0b0b0" stroke-width="1.5"/></svg>
<div class="t" style="left:1237.5px;top:758.6px;font-size:15px;letter-spacing:0.66px;">Textures</div>
<svg style="left:1307px;top:763px;" width="8" height="11" viewBox="0 0 8 11"><path d="M1.5 1L6.5 5.5L1.5 10" fill="none" stroke="#b0b0b0" stroke-width="1.5"/></svg>
<div class="t" style="left:1322.5px;top:758.6px;font-size:15px;letter-spacing:0.16px;font-weight:bold;color:#dcdcdc">Planets</div>
<svg style="left:922.5px;top:787.5px;" width="8" height="11" viewBox="0 0 8 11"><path d="M0 0V11L8 5.5Z" fill="#6e6e6e"/></svg>
<svg style="left:939px;top:783px;" width="20" height="20" viewBox="0 0 20 20"><rect width="20" height="20" fill="#55565c"/><rect width="20" height="20" filter="url(#granite)" opacity="0.8"/></svg>
<div class="t" style="left:961px;top:782.7px;font-size:15px;letter-spacing:0.50px;">Asteroids</div>
<svg style="left:922.5px;top:807.5px;" width="8" height="11" viewBox="0 0 8 11"><path d="M0 0V11L8 5.5Z" fill="#6e6e6e"/></svg>
<svg style="left:939px;top:808px;" width="20" height="10" viewBox="0 0 20 10"><rect width="20" height="10" fill="#2a7bb8"/><rect y="3" width="20" height="2" fill="#9ec3dd"/><rect y="7" width="20" height="1.4" fill="#9ec3dd" opacity="0.7"/></svg>
<div class="t" style="left:961px;top:802.7px;font-size:15px;letter-spacing:0.12px;">Earth_4k</div>
<svg style="left:939px;top:823px;" width="20" height="20" viewBox="0 0 20 20"><rect width="20" height="20" fill="#1c1c1c"/><g fill="#3f8fc8"><circle cx="4.5" cy="4.5" r="3.4"/><circle cx="4.5" cy="13" r="3.8"/><circle cx="13.5" cy="15.5" r="3.8"/><rect x="0" y="15" width="9" height="5"/></g></svg>
<div class="t" style="left:961px;top:822.7px;font-size:15px;letter-spacing:0.09px;">Earth_Lod</div>
<svg style="left:939px;top:848px;" width="20" height="10" viewBox="0 0 20 10"><rect width="20" height="10" fill="#d9a36c"/><rect y="3" width="20" height="2" fill="#f0d2ae"/><rect y="7" width="20" height="1.4" fill="#f0d2ae" opacity="0.7"/></svg>
<div class="t" style="left:961px;top:842.7px;font-size:15px;letter-spacing:0.38px;">Jupiter_2k</div>
<svg style="left:939px;top:863px;" width="20" height="20" viewBox="0 0 20 20"><rect width="20" height="20" fill="#1c1c1c"/><g fill="#e0a060"><circle cx="4.5" cy="4.5" r="3.4"/><circle cx="4.5" cy="13" r="3.8"/><circle cx="13.5" cy="15.5" r="3.8"/><rect x="0" y="15" width="9" height="5"/></g></svg>
<div class="t" style="left:961px;top:862.7px;font-size:15px;letter-spacing:0.33px;">Jupiter_Lod</div>
<svg style="left:939px;top:888px;" width="20" height="10" viewBox="0 0 20 10"><rect width="20" height="10" fill="#c9553a"/><rect y="3" width="20" height="2" fill="#e08060"/><rect y="7" width="20" height="1.4" fill="#e08060" opacity="0.7"/></svg>
<div class="t" style="left:961px;top:882.7px;font-size:15px;letter-spacing:0.21px;">Mars_2k</div>
<svg style="left:939px;top:903px;" width="20" height="20" viewBox="0 0 20 20"><rect width="20" height="20" fill="#1c1c1c"/><g fill="#d0603c"><circle cx="4.5" cy="4.5" r="3.4"/><circle cx="4.5" cy="13" r="3.8"/><circle cx="13.5" cy="15.5" r="3.8"/><rect x="0" y="15" width="9" height="5"/></g></svg>
<div class="t" style="left:961px;top:902.7px;font-size:15px;letter-spacing:0.16px;">Mars_Lod</div>
<svg style="left:939px;top:928px;" width="20" height="10" viewBox="0 0 20 10"><rect width="20" height="10" fill="#b88648"/><rect y="3" width="20" height="2" fill="#d6a868"/><rect y="7" width="20" height="1.4" fill="#d6a868" opacity="0.7"/></svg>
<div class="t" style="left:961px;top:922.7px;font-size:15px;letter-spacing:0.36px;">Mercury_2k</div>
<svg style="left:939px;top:943px;" width="20" height="20" viewBox="0 0 20 20"><rect width="20" height="20" fill="#1c1c1c"/><g fill="#d09040"><circle cx="4.5" cy="4.5" r="3.4"/><circle cx="4.5" cy="13" r="3.8"/><circle cx="13.5" cy="15.5" r="3.8"/><rect x="0" y="15" width="9" height="5"/></g></svg>
<div class="t" style="left:961px;top:942.7px;font-size:15px;letter-spacing:0.31px;">Mercury_Lod</div>
<svg style="left:939px;top:968px;" width="20" height="10" viewBox="0 0 20 10"><rect width="20" height="10" fill="#8a8688"/><rect y="3" width="20" height="2" fill="#b0acae"/><rect y="7" width="20" height="1.4" fill="#b0acae" opacity="0.7"/></svg>
<div class="t" style="left:961px;top:962.7px;font-size:15px;letter-spacing:0.33px;">Moon_2k</div>
<svg style="left:939px;top:983px;" width="20" height="20" viewBox="0 0 20 20"><rect width="20" height="20" fill="#1c1c1c"/><g fill="#a8a4a6"><circle cx="4.5" cy="4.5" r="3.4"/><circle cx="4.5" cy="13" r="3.8"/><circle cx="13.5" cy="15.5" r="3.8"/><rect x="0" y="15" width="9" height="5"/></g></svg>
<div class="t" style="left:961px;top:982.7px;font-size:15px;letter-spacing:0.26px;">Moon_Lod</div>
<svg style="left:939px;top:1008px;" width="20" height="10" viewBox="0 0 20 10"><rect width="20" height="10" fill="#2f55d8"/><rect y="3" width="20" height="2" fill="#5577ee"/><rect y="7" width="20" height="1.4" fill="#5577ee" opacity="0.7"/></svg>
<div class="t" style="left:961px;top:1002.7px;font-size:15px;letter-spacing:0.31px;">Neptune_2k</div>
<svg style="left:939px;top:1023px;" width="20" height="20" viewBox="0 0 20 20"><rect width="20" height="20" fill="#1c1c1c"/><g fill="#3358e0"><circle cx="4.5" cy="4.5" r="3.4"/><circle cx="4.5" cy="13" r="3.8"/><circle cx="13.5" cy="15.5" r="3.8"/><rect x="0" y="15" width="9" height="5"/></g></svg>
<div class="t" style="left:961px;top:1022.7px;font-size:15px;letter-spacing:0.36px;">Neptune_Lod</div>
<svg style="left:939px;top:1048px;" width="20" height="10" viewBox="0 0 20 10"><rect width="20" height="10" fill="#caa27c"/><rect y="3" width="20" height="2" fill="#f0e0cc"/><rect y="7" width="20" height="1.4" fill="#f0e0cc" opacity="0.7"/></svg>
<div class="t" style="left:961px;top:1042.7px;font-size:15px;letter-spacing:0.20px;">Pluto_2k</div>
<svg style="left:939px;top:1063px;" width="20" height="20" viewBox="0 0 20 20"><rect width="20" height="20" fill="#1c1c1c"/><g fill="#d8b48c"><circle cx="4.5" cy="4.5" r="3.4"/><circle cx="4.5" cy="13" r="3.8"/><circle cx="13.5" cy="15.5" r="3.8"/><rect x="0" y="15" width="9" height="5"/></g></svg>
<div class="t" style="left:961px;top:1062.7px;font-size:15px;letter-spacing:0.16px;">Pluto_Lod</div>
<div style="left:1418px;top:781px;width:18px;height:306px;background:#353535"></div>
<svg style="left:1422px;top:789px;" width="10" height="7" viewBox="0 0 10 7"><path d="M0 7H10L5 0Z" fill="#c4c4c4"/></svg>
<svg style="left:1422px;top:1073px;" width="10" height="7" viewBox="0 0 10 7"><path d="M0 0H10L5 7Z" fill="#c4c4c4"/></svg>
<div style="left:1420.5px;top:802px;width:12.5px;height:190px;background:#5f5f5f;border-radius:6px"></div>
<div style="left:1353px;top:1099px;width:63px;height:2px;background:#5e5e5e"></div>
<div style="left:1347px;top:1094px;width:12px;height:12px;background:#bdbdbd;border-radius:6px"></div>
<div style="left:0px;top:1113px;width:1919px;height:25px;background:#191919"></div>
<svg style="left:2px;top:1117px;" width="18" height="18" viewBox="0 0 18 18"><path d="M9 1a7.6 7.6 0 1 1-4.6 13.7L1.4 16.4l1.2-3.6A7.6 7.6 0 0 1 9 1Z" fill="#e6e6e6"/><rect x="7.9" y="4" width="2.2" height="6" rx="1" fill="#191919"/><circle cx="9" cy="12.4" r="1.3" fill="#191919"/></svg>
<div class="t" style="left:25.5px;top:1117.1px;font-size:15px;letter-spacing:0.38px;color:#c4c4c4">[TMP Essential Resources] have been imported.</div>
<div style="left:1820px;top:1114px;width:1px;height:24px;background:#2a2a2a"></div>
<div style="left:1853px;top:1114px;width:1px;height:24px;background:#2a2a2a"></div>
<div style="left:1886px;top:1114px;width:1px;height:24px;background:#2a2a2a"></div>
<svg style="left:1827px;top:1117px;" width="20" height="20" viewBox="0 0 20 20"><g fill="#b4b4b4"><ellipse cx="10" cy="12" rx="4.4" ry="5.6"/><circle cx="10" cy="5.6" r="2.4"/></g><g stroke="#b4b4b4" stroke-width="1.3" fill="none"><path d="M5.6 9L3 6.6M14.4 9L17 6.6M5.4 12.4H2.4M14.6 12.4H17.6M6 15.6L3.4 18M14 15.6L16.6 18"/></g><path d="M3 2L17 19" stroke="#191919" stroke-width="3"/><path d="M3 2L17 19" stroke="#b4b4b4" stroke-width="1.3"/></svg>
<svg style="left:1860px;top:1117px;" width="20" height="20" viewBox="0 0 20 20"><g fill="#b4b4b4"><ellipse cx="10" cy="5" rx="7" ry="3"/><path d="M3 7.4C5 10 15 10 17 7.4V10.4C15 13 5 13 3 10.4Z"/><path d="M3 12.4C5 15 15 15 17 12.4V15.4C15 18 5 18 3 15.4Z"/></g><path d="M3 2L17 19" stroke="#191919" stroke-width="3"/><path d="M3 2L17 19" stroke="#b4b4b4" stroke-width="1.3"/></svg>
<svg style="left:1893px;top:1117px;" width="20" height="20" viewBox="0 0 20 20"><circle cx="10" cy="10" r="8" fill="none" stroke="#c4c4c4" stroke-width="1.4"/><path d="M6 10.2L9 13L14.2 7" fill="none" stroke="#c4c4c4" stroke-width="1.7"/></svg>
<div style="left:1438px;top:1104px;width:481px;height:9px;background:#383838"></div>
<svg style="left:1486px;top:913px;" width="385" height="191" viewBox="0 0 385 191"><rect width="385" height="191" fill="#1766a8"/><path d="M16 17L30 15L42 18L42 33L30 35L22 30Z" fill="#8c9c8e"/><path d="M328 12L355 11L369 14L365 30L361 44L355 56L349 52L341 56L335 46L328 40Z" fill="#86a07e"/><path d="M335 20L351 18L355 34L341 36Z" fill="#a3b59a"/><path d="M335 96L343 93L349 99L345 107L337 104Z" fill="#7d9a62"/><path d="M329 114L341 108L351 110L355 122L351 138L341 142L330 136Z" fill="#b79c6c"/><path d="M333 116L343 114L348 124L342 133L333 130Z" fill="#c8865a"/><path d="M0 0H385V13Q365.75 17 346.5 12T231.0 14T134.75 12T38.5 19T0 17Z" fill="#f1f4f7"/><path d="M0 191H385V169Q365.75 166 338.8 170T231.0 177T115.5 179T34.65 172T0 176Z" fill="#eef1f6"/><rect width="385" height="191" filter="url(#clouds2)" opacity="0.85"/></svg>
<div style="left:1527.5px;top:747px;width:287.5px;height:391px;background:#383838;border:1px solid #232323;border-bottom:none"></div>
<div style="left:1533.5px;top:753px;width:274px;height:18.5px;background:#2a2a2a;border:1px solid #3a79bb;border-radius:4px"></div>
<svg style="left:1538px;top:757px;" width="11" height="11" viewBox="0 0 11 11"><circle cx="4.2" cy="4.2" r="2.8" fill="none" stroke="#c4c4c4" stroke-width="1.4"/><path d="M6.2 6.2L9.6 9.6" stroke="#c4c4c4" stroke-width="1.6"/></svg>
<div class="t" style="left:1551px;top:752.1px;font-size:15px;letter-spacing:0.24px;color:#d8d8d8">butt</div>
<div style="left:1577px;top:755px;width:1px;height:15px;background:#e0e0e0"></div>
<svg style="left:1792px;top:757px;" width="10" height="10" viewBox="0 0 10 10"><path d="M1.5 1.5L8.5 8.5M8.5 1.5L1.5 8.5" stroke="#c4c4c4" stroke-width="1.2"/></svg>
<div style="left:1528.5px;top:774px;width:285.5px;height:31px;background:#3c3c3c"></div>
<div class="t" style="left:1645px;top:781.6px;font-size:15px;letter-spacing:0.16px;font-weight:bold;color:#d0d0d0">Search</div>
<div style="left:1528.5px;top:805.5px;width:268.5px;height:24.5px;background:#3e5f96"></div>
<svg style="left:1533px;top:810px;" width="15" height="15" viewBox="0 0 15 15"><circle cx="7.5" cy="7.5" r="6.6" fill="#8f8f8f" stroke="#d8d8d8" stroke-width="1.2"/><circle cx="7.5" cy="7.5" r="4.6" fill="#c8c8c8"/></svg>
<div class="t" style="left:1551px;top:807.6px;font-size:15px;letter-spacing:0.60px;color:#f0f0f0">Button</div>
<div class="clip" style="left:1528.5px;top:830px;width:285.5px;height:150px">
<svg style="left:4.5px;top:3.5px;" width="15" height="18" viewBox="0 0 15 18"><path d="M1 0.5H10L14 4.5V17.5H1Z" fill="#e6e6e6"/><path d="M10 0.5V4.5H14Z" fill="#b8b8b8"/><text x="7.4" y="14.2" font-size="12" font-weight="bold" font-family="Liberation Sans,sans-serif" text-anchor="middle" fill="#3c8c3a">#</text></svg>
<div class="t" style="left:22.5px;top:2.6px;font-size:15px;letter-spacing:0.36px;">Debug UI Handler Button</div>
<div class="t" style="left:202.5px;top:2.6px;font-size:15px;letter-spacing:0.22px;color:#7c7c7c">(UnityEngine.Rendering.UI)</div>
<svg style="left:4.5px;top:28.5px;" width="15" height="18" viewBox="0 0 15 18"><path d="M1 0.5H10L14 4.5V17.5H1Z" fill="#e6e6e6"/><path d="M10 0.5V4.5H14Z" fill="#b8b8b8"/><text x="7.4" y="14.2" font-size="12" font-weight="bold" font-family="Liberation Sans,sans-serif" text-anchor="middle" fill="#3c8c3a">#</text></svg>
<div class="t" style="left:22.5px;top:27.6px;font-size:15px;letter-spacing:0.50px;">On-Screen Button</div>
<svg style="left:4.5px;top:53.5px;" width="15" height="18" viewBox="0 0 15 18"><path d="M1 0.5H10L14 4.5V17.5H1Z" fill="#e6e6e6"/><path d="M10 0.5V4.5H14Z" fill="#b8b8b8"/><text x="7.4" y="14.2" font-size="12" font-weight="bold" font-family="Liberation Sans,sans-serif" text-anchor="middle" fill="#3c8c3a">#</text></svg>
<div class="t" style="left:22.5px;top:52.6px;font-size:15px;letter-spacing:0.63px;">Tool Button</div>
<div class="t" style="left:108.5px;top:52.6px;font-size:15px;letter-spacing:0.11px;color:#7c7c7c">(UnityEngine.XR.ARFoundation)</div>
<svg style="left:4.5px;top:78.5px;" width="15" height="18" viewBox="0 0 15 18"><path d="M1 0.5H10L14 4.5V17.5H1Z" fill="#e6e6e6"/><path d="M10 0.5V4.5H14Z" fill="#b8b8b8"/><text x="7.4" y="14.2" font-size="12" font-weight="bold" font-family="Liberation Sans,sans-serif" text-anchor="middle" fill="#3c8c3a">#</text></svg>
<div class="t" style="left:22.5px;top:77.6px;font-size:15px;letter-spacing:0.50px;">Unity On Button Click Message Listener</div>
<svg style="left:4.5px;top:103.5px;" width="15" height="18" viewBox="0 0 15 18"><path d="M1 0.5H10L14 4.5V17.5H1Z" fill="#e6e6e6"/><path d="M10 0.5V4.5H14Z" fill="#b8b8b8"/><text x="7.4" y="14.2" font-size="12" font-weight="bold" font-family="Liberation Sans,sans-serif" text-anchor="middle" fill="#3c8c3a">#</text></svg>
<div class="t" style="left:22.5px;top:102.6px;font-size:15px;letter-spacing:0.48px;">Unity On Mouse Up As Button Message Listener</div>
<div class="t" style="left:22.5px;top:127.6px;font-size:15px;letter-spacing:0.60px;">New script</div>
</div>
<svg style="left:1784px;top:961px;" width="8" height="13" viewBox="0 0 8 13"><path d="M1.5 1.5L6.5 6.5L1.5 11.5" fill="none" stroke="#b0b0b0" stroke-width="1.5"/></svg>
<svg style="left:0px;top:0px;pointer-events:none" width="1919" height="1138" viewBox="0 0 1919 1138"><g stroke="#f4f4f4" stroke-width="1.15" fill="#f4f4f4"><path d="M1166 413.5L1046.5 311.5"/><path d="M1040 306L1050.3 310.1L1045.7 315.6Z" stroke="none"/><path d="M1357 628L1559.1 804.9"/><path d="M1565.5 810.5L1555.2 806.3L1560.0 800.9Z" stroke="none"/></g></svg>
</body></html>
